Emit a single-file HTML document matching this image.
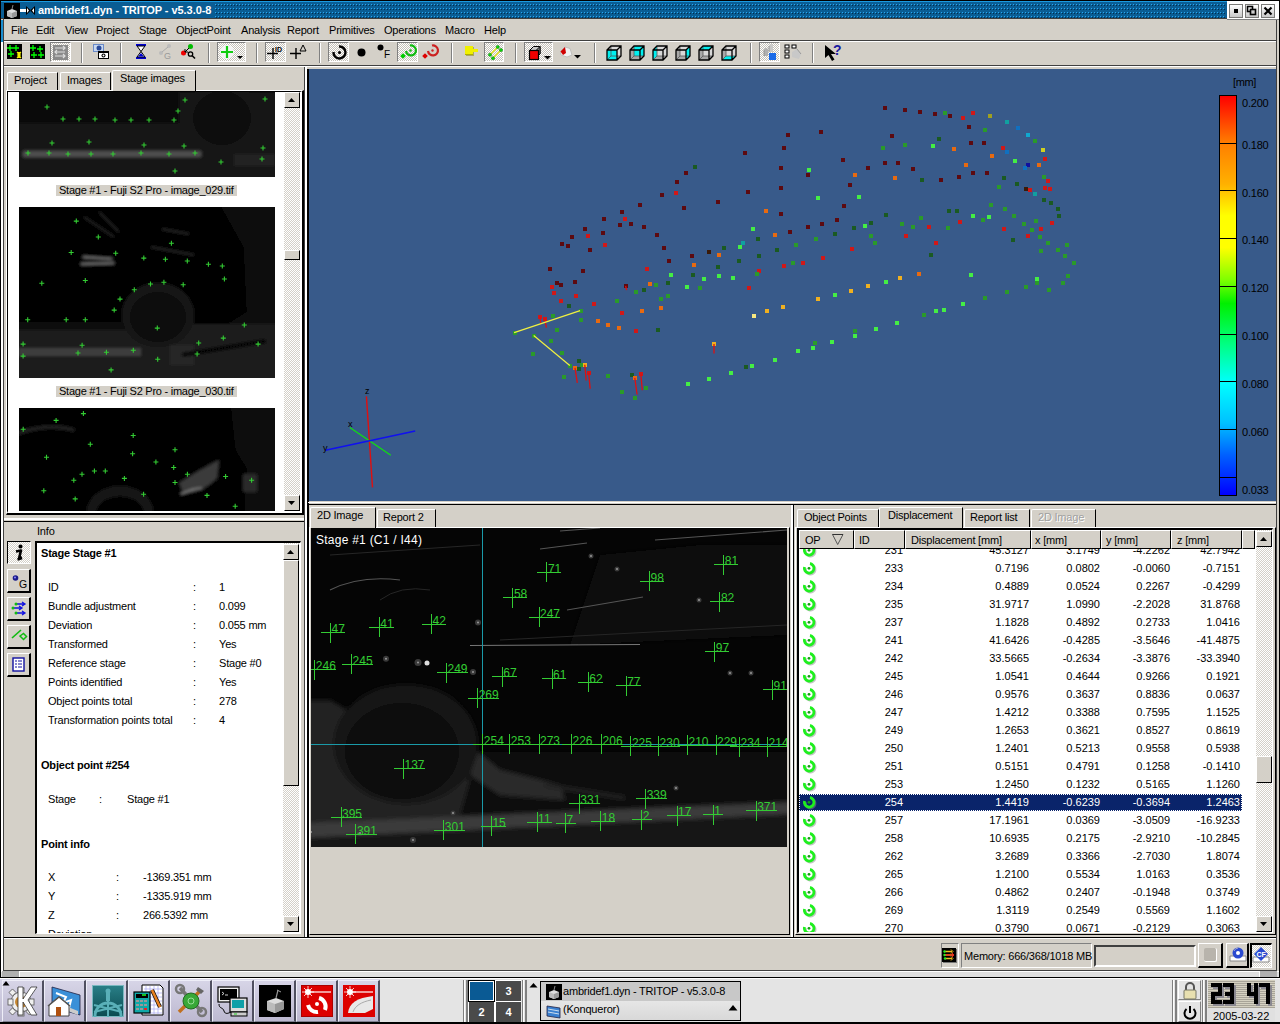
<!DOCTYPE html>
<html><head><meta charset="utf-8">
<style>
*{box-sizing:border-box}
html,body{margin:0;padding:0}
body{width:1280px;height:1024px;overflow:hidden;position:relative;background:#d4d0c8;font-family:"Liberation Sans",sans-serif;font-size:11px;color:#000}
.a{position:absolute}
.t{position:absolute;white-space:pre;line-height:13px;letter-spacing:-0.2px}
.r{position:absolute;white-space:pre;line-height:13px;text-align:right}
svg{overflow:visible}
</style></head><body>
<!-- window frame -->
<div class="a" style="left:0;top:0;width:1280px;height:1px;background:#000"></div>
<div class="a" style="left:0;top:0;width:1px;height:977px;background:#000"></div>
<div class="a" style="left:1279px;top:0;width:1px;height:977px;background:#000"></div>
<div class="a" style="left:1px;top:20px;width:2px;height:22px;background:#1a8ed0"></div>
<div class="a" style="left:1px;top:42px;width:2px;height:935px;background:#fff"></div>
<div class="a" style="left:3px;top:19px;width:1px;height:952px;background:#404040"></div>
<div class="a" style="left:1277px;top:19px;width:2px;height:958px;background:#d4d0c8"></div>
<div class="a" style="left:1276px;top:19px;width:1px;height:952px;background:#404040"></div>
<!-- title bar -->
<div class="a" style="left:1px;top:1px;width:1226px;height:18px;background:#0a5d94;border-top:1px solid #1a9ae0;border-bottom:1px solid #404040"></div>
<svg class="a" style="left:214px;top:3px" width="1012" height="16">
<defs><pattern id="dots" x="0" y="0" width="3" height="4" patternUnits="userSpaceOnUse">
<rect x="1" y="1" width="1" height="1" fill="#2aa8f0"/><rect x="2" y="2" width="1" height="1" fill="#02304f"/></pattern></defs>
<rect width="1012" height="16" fill="url(#dots)"/></svg>
<div class="a" style="left:1227px;top:1px;width:52px;height:19px;background:#fff;border-bottom:1px solid #808080"></div>
<div class="a" style="left:1229px;top:4px;width:14px;height:14px;border:1px solid #7a7a78;background:linear-gradient(#fff,#c8c8c8)"></div>
<div class="a" style="left:1234px;top:9px;width:4px;height:4px;background:#000"></div>
<div class="a" style="left:1245px;top:4px;width:14px;height:14px;border:1px solid #7a7a78;background:linear-gradient(#fff,#c8c8c8)"></div>
<svg class="a" style="left:1245px;top:4px" width="14" height="14"><rect x="2.5" y="2.5" width="5" height="5" fill="none" stroke="#000" stroke-width="1.6"/><rect x="5.5" y="5.5" width="5" height="5" fill="#ccc" stroke="#000" stroke-width="1.6"/></svg>
<div class="a" style="left:1261px;top:4px;width:14px;height:14px;border:1px solid #7a7a78;background:linear-gradient(#fff,#c8c8c8)"></div>
<svg class="a" style="left:1261px;top:4px" width="14" height="14"><path d="M3.5 3.5L10.5 10.5M10.5 3.5L3.5 10.5" stroke="#000" stroke-width="2.2"/></svg>
<div class="a" style="left:4px;top:3px;width:16px;height:16px;background:#000"></div>
<svg class="a" style="left:4px;top:3px" width="16" height="16"><path d="M3 8 L8 6 L13 8 L13 13 L8 15 L3 13Z" fill="#ddd"/><path d="M8 10 L13 8 L13 13 L8 15Z" fill="#999"/><path d="M3 8 L8 10 L8 15 L3 13Z" fill="#bbb"/><path d="M8 6 L9 2" stroke="#888" stroke-width="1"/></svg>
<svg class="a" style="left:20px;top:4px" width="16" height="14"><rect x="0" y="5" width="6" height="3" fill="#fff"/><path d="M6 2 L11 6.5 L6 11Z M15 2 L10 6.5 L15 11Z" fill="#000"/><path d="M7 4 L9 6.5 L7 9Z M14 4 L12 6.5 L14 9Z" fill="#fff"/></svg>
<div class="t" style="left:38px;top:4px;color:#fff;font-weight:bold;font-size:11px;letter-spacing:-0.05px">ambridef1.dyn - TRITOP - v5.3.0-8</div>
<!-- menu -->
<div class="t" style="left:11px;top:24px">File</div>
<div class="t" style="left:36px;top:24px">Edit</div>
<div class="t" style="left:65px;top:24px">View</div>
<div class="t" style="left:96px;top:24px">Project</div>
<div class="t" style="left:139px;top:24px">Stage</div>
<div class="t" style="left:176px;top:24px">ObjectPoint</div>
<div class="t" style="left:241px;top:24px">Analysis</div>
<div class="t" style="left:287px;top:24px">Report</div>
<div class="t" style="left:329px;top:24px">Primitives</div>
<div class="t" style="left:384px;top:24px">Operations</div>
<div class="t" style="left:445px;top:24px">Macro</div>
<div class="t" style="left:484px;top:24px">Help</div>
<div class="a" style="left:4px;top:40px;width:1272px;height:1px;background:#404040"></div>
<div class="a" style="left:4px;top:41px;width:1272px;height:1px;background:#fff"></div>
<div class="a" style="left:4px;top:65px;width:1272px;height:1px;background:#404040"></div>
<div class="a" style="left:4px;top:66px;width:1272px;height:1px;background:#fff"></div>

<!-- toolbar -->

<svg class="a" style="left:7px;top:44px" width="15" height="15"><rect width="15" height="15" fill="#000"/><path d="M3 1v6M0 4h6M9 1v6M6 4h6M4 7v6M1 10h6" stroke="#0f0" stroke-width="1.3"/><path d="M10 8l2 2 2-2M10 14l2-2 2 2M11 10h2v2h-2z" stroke="#ee0" stroke-width="1.2" fill="#ee0"/></svg>
<svg class="a" style="left:30px;top:44px" width="15" height="15"><rect width="15" height="15" fill="#000"/><path d="M3 1v6M0 4h6M10 2v6M7 5h6M4 8v6M1 11h6M11 8v6M8 11h6" stroke="#0f0" stroke-width="1.3"/></svg>
<div class="a" style="left:50px;top:42px;width:21px;height:20px;border-top:1px solid #808080;border-left:1px solid #808080;border-bottom:1px solid #fff;border-right:1px solid #fff;background:repeating-conic-gradient(#c4c0b8 0 25%,#fff 0 50%) 0 0/2px 2px"></div>
<svg class="a" style="left:53px;top:45px" width="15" height="15"><rect width="15" height="15" fill="#8a8a8a"/><path d="M2 3h10M2 7h10M2 11h10M10 1l2 2-2 2M4 5l-2 2 2 2M10 9l2 2-2 2" stroke="#ddd" stroke-width="1.2" fill="none"/></svg>
<div class="a" style="left:81px;top:43px;width:2px;height:20px;border-left:1px solid #808080;border-right:1px solid #fff"></div>
<svg class="a" style="left:93px;top:44px" width="17" height="16"><rect x="0" y="0" width="11" height="8" fill="#6a8ac8"/><rect x="1" y="1" width="9" height="6" fill="#c8d8f0"/><circle cx="6" cy="4" r="2.5" fill="#2a4a9a"/><rect x="5" y="7" width="11" height="8" fill="#000"/><rect x="6" y="9" width="9" height="5" fill="#fff"/><circle cx="10.5" cy="11.5" r="2" fill="#000"/><circle cx="10.5" cy="11.5" r="1" fill="#fff"/></svg>
<div class="a" style="left:120px;top:43px;width:2px;height:20px;border-left:1px solid #808080;border-right:1px solid #fff"></div>
<svg class="a" style="left:136px;top:44px" width="11" height="16"><rect x="0" y="0" width="10" height="2" fill="#00c"/><rect x="0" y="13" width="10" height="2" fill="#00c"/><path d="M1 2h8L5 7.5 9 13H1L5 7.5Z" fill="#fff" stroke="#000" stroke-width="1"/><path d="M2 12.5h6L5 9Z" fill="#00c"/></svg>
<svg class="a" style="left:158px;top:44px" width="14" height="16"><circle cx="11" cy="2" r="2" fill="#bbb"/><circle cx="3" cy="9" r="2" fill="#bbb"/><path d="M4 8L10 3" stroke="#aaa"/><text x="6" y="15" font-size="9" fill="#999" font-family="Liberation Sans">G</text></svg>
<svg class="a" style="left:181px;top:44px" width="16" height="16"><circle cx="9.5" cy="2.5" r="2.5" fill="#0b0"/><circle cx="2.5" cy="9" r="2.5" fill="#e00"/><path d="M8 4L4 8M4 5v3h3" stroke="#000" stroke-width="1" fill="none"/><circle cx="9.5" cy="10" r="2.2" fill="none" stroke="#000" stroke-width="1.3"/><path d="M11 11.5L14 14.5" stroke="#000" stroke-width="1.6"/></svg>
<div class="a" style="left:208px;top:43px;width:2px;height:20px;border-left:1px solid #808080;border-right:1px solid #fff"></div>
<div class="a" style="left:217px;top:42px;width:29px;height:20px;border-top:1px solid #808080;border-left:1px solid #808080;border-bottom:1px solid #fff;border-right:1px solid #fff;background:repeating-conic-gradient(#c4c0b8 0 25%,#fff 0 50%) 0 0/2px 2px"></div>
<svg class="a" style="left:219px;top:44px" width="26" height="17"><circle cx="8" cy="8" r="7" fill="#f4f4f4"/><path d="M8 2v12M2 8h12" stroke="#1c1" stroke-width="2.2"/><path d="M18 12h6l-3 3z" fill="#000"/></svg>
<div class="a" style="left:256px;top:43px;width:2px;height:20px;border-left:1px solid #808080;border-right:1px solid #fff"></div>
<div class="a" style="left:265px;top:42px;width:21px;height:20px;border-top:1px solid #808080;border-left:1px solid #808080;border-bottom:1px solid #fff;border-right:1px solid #fff;background:repeating-conic-gradient(#c4c0b8 0 25%,#fff 0 50%) 0 0/2px 2px"></div>
<svg class="a" style="left:267px;top:44px" width="18" height="16"><path d="M6 4v11M0 9.5h11" stroke="#000" stroke-width="1.4"/><text x="8" y="8" font-size="7" font-weight="bold" font-family="Liberation Sans">ID</text></svg>
<svg class="a" style="left:290px;top:44px" width="16" height="16"><path d="M6 4v11M0 9.5h11" stroke="#000" stroke-width="1.4"/><path d="M10 7l3-6 3 6z" fill="none" stroke="#000" stroke-width="1"/></svg>
<div class="a" style="left:319px;top:43px;width:2px;height:20px;border-left:1px solid #808080;border-right:1px solid #fff"></div>
<div class="a" style="left:328px;top:42px;width:21px;height:20px;border-top:1px solid #808080;border-left:1px solid #808080;border-bottom:1px solid #fff;border-right:1px solid #fff;background:repeating-conic-gradient(#c4c0b8 0 25%,#fff 0 50%) 0 0/2px 2px"></div>
<svg class="a" style="left:332px;top:45px" width="15" height="15"><path d="M7 1.5A6 6 0 1 1 1.5 7" fill="none" stroke="#000" stroke-width="2.4"/><circle cx="7.5" cy="7.5" r="1.5" fill="#000"/></svg>
<svg class="a" style="left:357px;top:48px" width="10" height="10"><circle cx="4.5" cy="4.5" r="4" fill="#000"/></svg>
<svg class="a" style="left:377px;top:44px" width="16" height="16"><circle cx="3.5" cy="3.5" r="3" fill="#000"/><text x="7" y="14" font-size="10" font-family="Liberation Sans">F</text></svg>
<div class="a" style="left:397px;top:42px;width:21px;height:20px;border-top:1px solid #808080;border-left:1px solid #808080;border-bottom:1px solid #fff;border-right:1px solid #fff;background:repeating-conic-gradient(#c4c0b8 0 25%,#fff 0 50%) 0 0/2px 2px"></div>
<svg class="a" style="left:401px;top:44px" width="15" height="16"><path d="M9 1.5A5 5 0 1 1 5 7" fill="none" stroke="#1b1" stroke-width="2.2"/><circle cx="9.5" cy="6.5" r="1.2" fill="#1b1"/><rect x="0" y="10" width="4" height="4" transform="rotate(45 2 12)" fill="#0c0"/></svg>
<svg class="a" style="left:423px;top:44px" width="15" height="16"><path d="M9 1.5A5 5 0 1 1 5 7" fill="none" stroke="#c22" stroke-width="2.2"/><circle cx="9.5" cy="6.5" r="1.2" fill="#c22"/><rect x="0" y="10" width="4" height="4" transform="rotate(45 2 12)" fill="#d00"/></svg>
<div class="a" style="left:451px;top:43px;width:2px;height:20px;border-left:1px solid #808080;border-right:1px solid #fff"></div>
<svg class="a" style="left:465px;top:46px" width="15" height="12"><rect x="1" y="1" width="8" height="9" fill="#808000" opacity="0.5"/><rect x="0" y="0" width="8" height="9" fill="#f0f000"/><rect x="8" y="3" width="5" height="3" fill="#f0f000"/><rect x="0" y="8" width="8" height="1" fill="#b0b000"/></svg>
<div class="a" style="left:484px;top:42px;width:20px;height:20px;border-top:1px solid #808080;border-left:1px solid #808080;border-bottom:1px solid #fff;border-right:1px solid #fff;background:repeating-conic-gradient(#c4c0b8 0 25%,#fff 0 50%) 0 0/2px 2px"></div>
<svg class="a" style="left:486px;top:44px" width="18" height="18"><path d="M4 10.75L11.75 3M7 14.25L15 6" stroke="#e8e820" stroke-width="1.4"/><circle cx="4" cy="10.75" r="1.6" fill="#10d010" stroke="#080" stroke-width="0.5"/><circle cx="7" cy="14.25" r="1.6" fill="#10d010" stroke="#080" stroke-width="0.5"/><circle cx="11.75" cy="3" r="1.6" fill="#10d010" stroke="#080" stroke-width="0.5"/><circle cx="15" cy="6" r="1.6" fill="#10d010" stroke="#080" stroke-width="0.5"/></svg>
<div class="a" style="left:515px;top:43px;width:2px;height:20px;border-left:1px solid #808080;border-right:1px solid #fff"></div>
<div class="a" style="left:524px;top:42px;width:29px;height:20px;border-top:1px solid #808080;border-left:1px solid #808080;border-bottom:1px solid #fff;border-right:1px solid #fff;background:repeating-conic-gradient(#c4c0b8 0 25%,#fff 0 50%) 0 0/2px 2px"></div>
<svg class="a" style="left:527px;top:44px" width="26" height="17"><path d="M2.5 6.5L6.5 2.5H13V10L9 14H2.5Z" fill="#c8c8c8" stroke="#000" stroke-width="1"/><path d="M9 6.5L13 2.5V10L9 14Z" fill="#8a8a8a" stroke="#000" stroke-width="1"/><rect x="2.5" y="6.5" width="9" height="9" fill="#f00000" stroke="#000" stroke-width="1.2"/><path d="M17 12h7l-3.5 3.5z" fill="#000"/></svg>
<svg class="a" style="left:559px;top:44px" width="24" height="17"><path d="M1.5 7.5L6 3L11 4.5L13 11L8 13L2 11Z" fill="#f0f0f0" stroke="#aaa" stroke-width="0.6"/><path d="M1.5 7.5L6 3L7 9L4 11Z" fill="#d00000"/><path d="M15 11h7l-3.5 3.5z" fill="#000"/></svg>
<div class="a" style="left:594px;top:43px;width:2px;height:20px;border-left:1px solid #808080;border-right:1px solid #fff"></div>
<svg class="a" style="left:606px;top:45px" width="17" height="17"><path d="M1 5L5 1H15V11L11 15H1Z" fill="#a8a8a8"/><path d="M5 1H15V11H5Z" fill="#d8d8d8"/><path d="M1 5H11V15H1Z" fill="#00f0f0"/><path d="M5 1V11H15M5 11L1 15" stroke="#555" stroke-width="0.8" fill="none"/><path d="M1 5L5 1H15V11L11 15H1Z M1 5H11V15M11 5L15 1" stroke="#000" stroke-width="1.3" fill="none"/></svg>
<svg class="a" style="left:629px;top:45px" width="17" height="17"><path d="M1 5L5 1H15V11L11 15H1Z" fill="#a8a8a8"/><path d="M5 1H15V11H5Z" fill="#d8d8d8"/><path d="M5 1H15V11H5Z" fill="#00f0f0"/><path d="M5 1V11H15M5 11L1 15" stroke="#555" stroke-width="0.8" fill="none"/><path d="M1 5L5 1H15V11L11 15H1Z M1 5H11V15M11 5L15 1" stroke="#000" stroke-width="1.3" fill="none"/></svg>
<svg class="a" style="left:652px;top:45px" width="17" height="17"><path d="M1 5L5 1H15V11L11 15H1Z" fill="#a8a8a8"/><path d="M5 1H15V11H5Z" fill="#d8d8d8"/><path d="M1 5L5 1V11L1 15Z" fill="#00f0f0"/><path d="M5 1V11H15M5 11L1 15" stroke="#555" stroke-width="0.8" fill="none"/><path d="M1 5L5 1H15V11L11 15H1Z M1 5H11V15M11 5L15 1" stroke="#000" stroke-width="1.3" fill="none"/></svg>
<svg class="a" style="left:675px;top:45px" width="17" height="17"><path d="M1 5L5 1H15V11L11 15H1Z" fill="#a8a8a8"/><path d="M5 1H15V11H5Z" fill="#d8d8d8"/><path d="M11 5L15 1V11L11 15Z" fill="#00f0f0"/><path d="M5 1V11H15M5 11L1 15" stroke="#555" stroke-width="0.8" fill="none"/><path d="M1 5L5 1H15V11L11 15H1Z M1 5H11V15M11 5L15 1" stroke="#000" stroke-width="1.3" fill="none"/></svg>
<svg class="a" style="left:698px;top:45px" width="17" height="17"><path d="M1 5L5 1H15V11L11 15H1Z" fill="#a8a8a8"/><path d="M5 1H15V11H5Z" fill="#d8d8d8"/><path d="M1 5L5 1H15L11 5Z" fill="#00f0f0"/><path d="M5 1V11H15M5 11L1 15" stroke="#555" stroke-width="0.8" fill="none"/><path d="M1 5L5 1H15V11L11 15H1Z M1 5H11V15M11 5L15 1" stroke="#000" stroke-width="1.3" fill="none"/></svg>
<svg class="a" style="left:721px;top:45px" width="17" height="17"><path d="M1 5L5 1H15V11L11 15H1Z" fill="#a8a8a8"/><path d="M5 1H15V11H5Z" fill="#d8d8d8"/><path d="M1 15L5 11H15L11 15Z" fill="#00f0f0"/><path d="M5 1V11H15M5 11L1 15" stroke="#555" stroke-width="0.8" fill="none"/><path d="M1 5L5 1H15V11L11 15H1Z M1 5H11V15M11 5L15 1" stroke="#000" stroke-width="1.3" fill="none"/></svg>
<div class="a" style="left:750px;top:43px;width:2px;height:20px;border-left:1px solid #808080;border-right:1px solid #fff"></div>
<div class="a" style="left:759px;top:42px;width:21px;height:20px;border-top:1px solid #808080;border-left:1px solid #808080;border-bottom:1px solid #fff;border-right:1px solid #fff;background:repeating-conic-gradient(#c4c0b8 0 25%,#fff 0 50%) 0 0/2px 2px"></div>
<svg class="a" style="left:762px;top:44px" width="16" height="17"><path d="M2 6a2 2 0 0 1 4 0v6H2z" fill="#b0b0b0"/><path d="M7 2a2 2 0 0 1 4 0v6H7z" fill="#c8c8c8"/><rect x="7" y="9" width="7" height="7" fill="#1a6ae8"/><path d="M2 6v6M7 2v6" stroke="#888" stroke-width="0.8"/></svg>
<svg class="a" style="left:784px;top:44px" width="18" height="17"><rect x="1" y="1" width="4" height="3" fill="#fff" stroke="#000"/><rect x="1" y="6" width="4" height="3" fill="#fff" stroke="#000"/><rect x="1" y="11" width="4" height="3" fill="#fff" stroke="#000"/><rect x="8" y="1" width="4" height="3" fill="#fff" stroke="#000"/><path d="M8 8L13 5L17 10L15 15L8 13Z" fill="#c8c8c8"/><path d="M13 5L17 10" stroke="#999"/></svg>
<div class="a" style="left:812px;top:43px;width:2px;height:20px;border-left:1px solid #808080;border-right:1px solid #fff"></div>
<svg class="a" style="left:824px;top:44px" width="18" height="18"><path d="M1 1L1 14L4.5 11L8 17L10.5 15.5L7 10H12Z" fill="#000"/><text x="9" y="11" font-size="14" font-weight="bold" fill="#1a1aa0" font-family="Liberation Sans">?</text></svg>

<!-- left panel -->
<div class="a" style="left:7px;top:72px;width:51px;height:18px;border-top:1px solid #fff;border-left:1px solid #fff;border-right:1px solid #000;border-top-left-radius:2px"></div>
<div class="t" style="left:14px;top:74px">Project</div>
<div class="a" style="left:60px;top:72px;width:51px;height:18px;border-top:1px solid #fff;border-left:1px solid #fff;border-right:1px solid #000;border-top-left-radius:2px"></div>
<div class="t" style="left:67px;top:74px">Images</div>
<div class="a" style="left:112px;top:70px;width:84px;height:21px;border-top:1px solid #fff;border-left:1px solid #fff;border-right:1px solid #000;border-top-left-radius:2px;background:#d4d0c8;z-index:2"></div>
<div class="t" style="left:120px;top:72px;z-index:3">Stage images</div>
<div class="a" style="left:6px;top:90px;width:298px;height:425px;border-top:1px solid #fff;border-left:1px solid #fff;border-right:2px solid #000;border-bottom:2px solid #000"></div>
<div class="a" style="left:7px;top:91px;width:295px;height:422px;border-top:1px solid #000;border-left:1px solid #000;border-right:2px solid #fff;border-bottom:2px solid #fff;background:#fff;overflow:hidden">

<svg class="a" style="left:11px;top:0px" width="256" height="85" viewBox="0 86 256 85"><defs><filter id="bl0" x="-10%" y="-10%" width="120%" height="120%"><feGaussianBlur stdDeviation="1.5"/></filter><clipPath id="cp0"><rect x="0" y="0" width="256" height="171"/></clipPath></defs><g clip-path="url(#cp0)"><rect x="0" y="0" width="256" height="171" fill="#0a0a0a"/><g filter="url(#bl0)"><rect x="-5" y="117" width="270" height="60" fill="#161616"/>
<rect x="160" y="86" width="100" height="40" fill="#141414"/>
<ellipse cx="203" cy="110" rx="37" ry="34" fill="#181818"/>
<ellipse cx="203" cy="112" rx="29" ry="27" fill="#0a0a0a"/>
<rect x="4" y="145" width="178" height="6" fill="#505050"/>
<rect x="215" y="148" width="41" height="20" fill="#242424"/>
<rect x="-5" y="160" width="270" height="20" fill="#161616"/></g><path d="M25.5 101.0h5.0M28.0 98.5v5.0" stroke="#3c3" stroke-width="1.1"/><path d="M41.5 113.0h5.0M44.0 110.5v5.0" stroke="#3c3" stroke-width="1.1"/><path d="M57.5 113.0h5.0M60.0 110.5v5.0" stroke="#3c3" stroke-width="1.1"/><path d="M73.5 113.0h5.0M76.0 110.5v5.0" stroke="#3c3" stroke-width="1.1"/><path d="M93.5 114.0h5.0M96.0 111.5v5.0" stroke="#3c3" stroke-width="1.1"/><path d="M109.5 114.0h5.0M112.0 111.5v5.0" stroke="#3c3" stroke-width="1.1"/><path d="M127.5 114.0h5.0M130.0 111.5v5.0" stroke="#3c3" stroke-width="1.1"/><path d="M152.5 114.0h5.0M155.0 111.5v5.0" stroke="#3c3" stroke-width="1.1"/><path d="M156.5 105.0h5.0M159.0 102.5v5.0" stroke="#3c3" stroke-width="1.1"/><path d="M163.5 94.0h5.0M166.0 91.5v5.0" stroke="#3c3" stroke-width="1.1"/><path d="M243.5 93.0h5.0M246.0 90.5v5.0" stroke="#3c3" stroke-width="1.1"/><path d="M30.5 137.0h5.0M33.0 134.5v5.0" stroke="#3c3" stroke-width="1.1"/><path d="M67.5 136.0h5.0M70.0 133.5v5.0" stroke="#3c3" stroke-width="1.1"/><path d="M122.5 139.0h5.0M125.0 136.5v5.0" stroke="#3c3" stroke-width="1.1"/><path d="M162.5 140.0h5.0M165.0 137.5v5.0" stroke="#3c3" stroke-width="1.1"/><path d="M6.5 147.0h5.0M9.0 144.5v5.0" stroke="#3c3" stroke-width="1.1"/><path d="M27.5 147.0h5.0M30.0 144.5v5.0" stroke="#3c3" stroke-width="1.1"/><path d="M46.5 148.0h5.0M49.0 145.5v5.0" stroke="#3c3" stroke-width="1.1"/><path d="M69.5 148.0h5.0M72.0 145.5v5.0" stroke="#3c3" stroke-width="1.1"/><path d="M91.5 148.0h5.0M94.0 145.5v5.0" stroke="#3c3" stroke-width="1.1"/><path d="M119.5 147.0h5.0M122.0 144.5v5.0" stroke="#3c3" stroke-width="1.1"/><path d="M147.5 148.0h5.0M150.0 145.5v5.0" stroke="#3c3" stroke-width="1.1"/><path d="M173.5 147.0h5.0M176.0 144.5v5.0" stroke="#3c3" stroke-width="1.1"/><path d="M199.5 156.0h5.0M202.0 153.5v5.0" stroke="#3c3" stroke-width="1.1"/><path d="M241.5 142.0h5.0M244.0 139.5v5.0" stroke="#3c3" stroke-width="1.1"/><path d="M240.5 153.0h5.0M243.0 150.5v5.0" stroke="#3c3" stroke-width="1.1"/><path d="M153.5 165.0h5.0M156.0 162.5v5.0" stroke="#3c3" stroke-width="1.1"/></g></svg>
<div class="a" style="left:48px;top:93px;width:181px;height:11px;background:#d4d0c8"></div><div class="t" style="left:51px;top:92px;letter-spacing:-0.25px">Stage #1 - Fuji S2 Pro - image_029.tif</div>
<svg class="a" style="left:11px;top:115px" width="256" height="171" viewBox="0 0 256 171"><defs><filter id="bl115" x="-10%" y="-10%" width="120%" height="120%"><feGaussianBlur stdDeviation="1.5"/></filter><clipPath id="cp115"><rect x="0" y="0" width="256" height="171"/></clipPath></defs><g clip-path="url(#cp115)"><rect x="0" y="0" width="256" height="171" fill="#0a0a0a"/><g filter="url(#bl115)"><rect x="-5" y="-5" width="270" height="180" fill="#111"/>
<path d="M-5 -5H200L225 40L228 105L205 120H-5Z" fill="#050505"/>
<rect x="-5" y="117" width="270" height="60" fill="#1a1a1a"/>
<path d="M-5 115H120L110 123H-5Z" fill="#070707"/>
<ellipse cx="139" cy="108" rx="36" ry="32" fill="#161616"/>
<ellipse cx="139" cy="110" rx="28" ry="25" fill="#090909"/>
<rect x="0" y="141" width="122" height="8" fill="#3e3e3e"/>
<rect x="151" y="138" width="24" height="20" fill="#262626"/>
<path d="M163 148L247 134" stroke="#060606" stroke-width="4"/>
<path d="M64 50L93 52M62 57L95 56" stroke="#8a8a8a" stroke-width="1.6"/>
<path d="M65 10L95 30M80 5L100 25M143 22L170 27M132 40L175 48" stroke="#3a3a3a" stroke-width="1"/></g><path d="M54.8 14.1h5.0M57.3 11.6v5.0" stroke="#3c3" stroke-width="1.1"/><path d="M76.8 30.0h5.0M79.3 27.5v5.0" stroke="#3c3" stroke-width="1.1"/><path d="M49.7 45.5h5.0M52.2 43.0v5.0" stroke="#3c3" stroke-width="1.1"/><path d="M94.2 46.2h5.0M96.7 43.7v5.0" stroke="#3c3" stroke-width="1.1"/><path d="M122.3 51.1h5.0M124.8 48.6v5.0" stroke="#3c3" stroke-width="1.1"/><path d="M143.9 52.2h5.0M146.4 49.7v5.0" stroke="#3c3" stroke-width="1.1"/><path d="M165.8 54.0h5.0M168.3 51.5v5.0" stroke="#3c3" stroke-width="1.1"/><path d="M186.9 57.3h5.0M189.4 54.8v5.0" stroke="#3c3" stroke-width="1.1"/><path d="M200.8 59.0h5.0M203.3 56.5v5.0" stroke="#3c3" stroke-width="1.1"/><path d="M202.9 72.0h5.0M205.4 69.5v5.0" stroke="#3c3" stroke-width="1.1"/><path d="M149.9 36.2h5.0M152.4 33.7v5.0" stroke="#3c3" stroke-width="1.1"/><path d="M20.3 76.2h5.0M22.8 73.7v5.0" stroke="#3c3" stroke-width="1.1"/><path d="M63.8 73.5h5.0M66.3 71.0v5.0" stroke="#3c3" stroke-width="1.1"/><path d="M112.8 82.8h5.0M115.3 80.3v5.0" stroke="#3c3" stroke-width="1.1"/><path d="M129.0 77.0h5.0M131.5 74.5v5.0" stroke="#3c3" stroke-width="1.1"/><path d="M142.4 75.2h5.0M144.9 72.7v5.0" stroke="#3c3" stroke-width="1.1"/><path d="M161.7 77.8h5.0M164.2 75.3v5.0" stroke="#3c3" stroke-width="1.1"/><path d="M98.5 92.1h5.0M101.0 89.6v5.0" stroke="#3c3" stroke-width="1.1"/><path d="M92.7 103.1h5.0M95.2 100.6v5.0" stroke="#3c3" stroke-width="1.1"/><path d="M6.2 112.8h5.0M8.7 110.3v5.0" stroke="#3c3" stroke-width="1.1"/><path d="M44.7 112.8h5.0M47.2 110.3v5.0" stroke="#3c3" stroke-width="1.1"/><path d="M63.8 112.8h5.0M66.3 110.3v5.0" stroke="#3c3" stroke-width="1.1"/><path d="M135.8 121.1h5.0M138.3 118.6v5.0" stroke="#3c3" stroke-width="1.1"/><path d="M222.8 118.0h5.0M225.3 115.5v5.0" stroke="#3c3" stroke-width="1.1"/><path d="M201.8 131.1h5.0M204.3 128.6v5.0" stroke="#3c3" stroke-width="1.1"/><path d="M177.2 136.0h5.0M179.7 133.5v5.0" stroke="#3c3" stroke-width="1.1"/><path d="M236.6 137.1h5.0M239.1 134.6v5.0" stroke="#3c3" stroke-width="1.1"/><path d="M1.6 137.1h5.0M4.1 134.6v5.0" stroke="#3c3" stroke-width="1.1"/><path d="M60.6 138.3h5.0M63.1 135.8v5.0" stroke="#3c3" stroke-width="1.1"/><path d="M1.6 149.1h5.0M4.1 146.6v5.0" stroke="#3c3" stroke-width="1.1"/><path d="M56.5 146.0h5.0M59.0 143.5v5.0" stroke="#3c3" stroke-width="1.1"/><path d="M84.9 145.3h5.0M87.4 142.8v5.0" stroke="#3c3" stroke-width="1.1"/><path d="M111.8 143.3h5.0M114.3 140.8v5.0" stroke="#3c3" stroke-width="1.1"/><path d="M136.2 152.2h5.0M138.7 149.7v5.0" stroke="#3c3" stroke-width="1.1"/><path d="M175.6 147.0h5.0M178.1 144.5v5.0" stroke="#3c3" stroke-width="1.1"/><path d="M89.6 162.9h5.0M92.1 160.4v5.0" stroke="#3c3" stroke-width="1.1"/></g></svg>
<div class="a" style="left:48px;top:294px;width:181px;height:11px;background:#d4d0c8"></div><div class="t" style="left:51px;top:293px;letter-spacing:-0.25px">Stage #1 - Fuji S2 Pro - image_030.tif</div>
<svg class="a" style="left:11px;top:316px" width="256" height="103" viewBox="0 0 256 103"><defs><filter id="bl316" x="-10%" y="-10%" width="120%" height="120%"><feGaussianBlur stdDeviation="1.5"/></filter><clipPath id="cp316"><rect x="0" y="0" width="256" height="171"/></clipPath></defs><g clip-path="url(#cp316)"><rect x="0" y="0" width="256" height="171" fill="#0a0a0a"/><g filter="url(#bl316)"><rect x="-5" y="-5" width="270" height="180" fill="#060606"/>
<path d="M212 -5H260V175H200L222 90Z" fill="#101010"/>
<path d="M0 20Q80 0 200 15L228 60L225 120H0Z" fill="#040404"/>
<path d="M160 75Q180 62 200 52L198 70Q185 84 165 86Z" fill="#3a3a3a"/>
<path d="M162 86Q175 80 183 80" stroke="#aaa" stroke-width="1.2" fill="none"/>

<ellipse cx="101" cy="104" rx="33" ry="26" fill="#121212"/>
<ellipse cx="101" cy="108" rx="25" ry="20" fill="#050505"/>
<path d="M0 25Q30 15 55 22" stroke="#242424" stroke-width="3" fill="none"/>
<rect x="224" y="66" width="14" height="18" rx="2" fill="#2a2a2a"/></g><path d="M61.9 5.6h5.0M64.4 3.1v5.0" stroke="#3c3" stroke-width="1.1"/><path d="M34.6 12.4h5.0M37.1 9.9v5.0" stroke="#3c3" stroke-width="1.1"/><path d="M1.7 21.2h5.0M4.2 18.7v5.0" stroke="#3c3" stroke-width="1.1"/><path d="M111.7 27.5h5.0M114.2 25.0v5.0" stroke="#3c3" stroke-width="1.1"/><path d="M68.8 36.2h5.0M71.3 33.7v5.0" stroke="#3c3" stroke-width="1.1"/><path d="M153.5 41.7h5.0M156.0 39.2v5.0" stroke="#3c3" stroke-width="1.1"/><path d="M111.1 45.8h5.0M113.6 43.3v5.0" stroke="#3c3" stroke-width="1.1"/><path d="M134.4 54.0h5.0M136.9 51.5v5.0" stroke="#3c3" stroke-width="1.1"/><path d="M25.0 49.3h5.0M27.5 46.8v5.0" stroke="#3c3" stroke-width="1.1"/><path d="M60.5 66.3h5.0M63.0 63.8v5.0" stroke="#3c3" stroke-width="1.1"/><path d="M72.9 63.0h5.0M75.4 60.5v5.0" stroke="#3c3" stroke-width="1.1"/><path d="M83.8 63.0h5.0M86.3 60.5v5.0" stroke="#3c3" stroke-width="1.1"/><path d="M102.9 70.4h5.0M105.4 67.9v5.0" stroke="#3c3" stroke-width="1.1"/><path d="M152.2 59.5h5.0M154.7 57.0v5.0" stroke="#3c3" stroke-width="1.1"/><path d="M165.9 66.3h5.0M168.4 63.8v5.0" stroke="#3c3" stroke-width="1.1"/><path d="M153.5 74.5h5.0M156.0 72.0v5.0" stroke="#3c3" stroke-width="1.1"/><path d="M204.1 68.5h5.0M206.6 66.0v5.0" stroke="#3c3" stroke-width="1.1"/><path d="M230.1 72.3h5.0M232.6 69.8v5.0" stroke="#3c3" stroke-width="1.1"/><path d="M52.3 72.3h5.0M54.8 69.8v5.0" stroke="#3c3" stroke-width="1.1"/><path d="M22.3 82.7h5.0M24.8 80.2v5.0" stroke="#3c3" stroke-width="1.1"/><path d="M53.7 90.9h5.0M56.2 88.4v5.0" stroke="#3c3" stroke-width="1.1"/><path d="M122.1 86.3h5.0M124.6 83.8v5.0" stroke="#3c3" stroke-width="1.1"/><path d="M185.5 87.4h5.0M188.0 84.9v5.0" stroke="#3c3" stroke-width="1.1"/><path d="M213.7 98.3h5.0M216.2 95.8v5.0" stroke="#3c3" stroke-width="1.1"/></g></svg>
</div>
<div class="a" style="left:284px;top:92px;width:16px;height:419px;background:repeating-conic-gradient(#d4d0c8 0 25%,#fff 0 50%) 0 0/2px 2px"></div>
<div class="a" style="left:284px;top:92px;width:16px;height:16px;background:#d4d0c8;border-top:1px solid #fff;border-left:1px solid #fff;border-right:1px solid #000;border-bottom:1px solid #000"></div>
<svg class="a" style="left:284px;top:92px" width="16" height="16"><path d="M4 10h7l-3.5-4z" fill="#000"/></svg>
<div class="a" style="left:284px;top:250px;width:16px;height:10px;background:#d4d0c8;border-top:1px solid #fff;border-left:1px solid #fff;border-right:1px solid #000;border-bottom:1px solid #000"></div>
<div class="a" style="left:284px;top:495px;width:16px;height:16px;background:#d4d0c8;border-top:1px solid #fff;border-left:1px solid #fff;border-right:1px solid #000;border-bottom:1px solid #000"></div>
<svg class="a" style="left:284px;top:495px" width="16" height="16"><path d="M4 6h7l-3.5 4z" fill="#000"/></svg>
<!-- splitter -->

<div class="a" style="left:4px;top:518px;width:300px;height:2px;background:#fff"></div>
<div class="a" style="left:4px;top:521px;width:300px;height:1px;background:#000"></div>
<div class="a" style="left:305px;top:67px;width:2px;height:870px;background:#fff"></div>
<div class="a" style="left:307px;top:69px;width:2px;height:868px;background:#000"></div>

<!-- 3D view -->
<div class="a" style="left:307px;top:69px;width:2px;height:434px;background:#000"></div>
<div class="a" style="left:304px;top:67px;width:1px;height:870px;background:#404040"></div>
<div class="a" style="left:309px;top:69px;width:967px;height:432px;background:#385a8a"></div>
<div class="a" style="left:308px;top:502px;width:968px;height:1px;background:#fff"></div>
<div class="a" style="left:308px;top:504px;width:968px;height:1px;background:#000"></div>
<svg class="a" style="left:309px;top:69px" width="966" height="432" shape-rendering="crispEdges">
<rect x="329" y="134" width="4" height="4" fill="#5c0a10"/>
<rect x="311" y="141" width="4" height="4" fill="#5c0a10"/>
<rect x="373" y="137" width="4" height="4" fill="#5c0a10"/>
<rect x="407" y="131" width="4" height="4" fill="#5c0a10"/>
<rect x="293" y="148" width="4" height="4" fill="#5c0a10"/>
<rect x="314" y="148" width="4" height="4" fill="#d01818"/>
<rect x="309" y="154" width="4" height="4" fill="#5c0a10"/>
<rect x="320" y="153" width="4" height="4" fill="#5c0a10"/>
<rect x="333" y="156" width="4" height="4" fill="#5c0a10"/>
<rect x="274" y="158" width="4" height="4" fill="#5c0a10"/>
<rect x="277" y="165" width="4" height="4" fill="#d01818"/>
<rect x="292" y="162" width="4" height="4" fill="#5c0a10"/>
<rect x="261" y="166" width="4" height="4" fill="#5c0a10"/>
<rect x="251" y="173" width="4" height="4" fill="#5c0a10"/>
<rect x="257" y="175" width="4" height="4" fill="#5c0a10"/>
<rect x="279" y="179" width="4" height="4" fill="#5c0a10"/>
<rect x="294" y="174" width="4" height="4" fill="#d01818"/>
<rect x="346" y="164" width="4" height="4" fill="#5c0a10"/>
<rect x="353" y="177" width="4" height="4" fill="#5c0a10"/>
<rect x="358" y="190" width="4" height="4" fill="#5c0a10"/>
<rect x="381" y="185" width="4" height="4" fill="#5c0a10"/>
<rect x="336" y="198" width="4" height="4" fill="#d01818"/>
<rect x="239" y="198" width="4" height="4" fill="#5c0a10"/>
<rect x="272" y="200" width="4" height="4" fill="#5c0a10"/>
<rect x="246" y="212" width="4" height="4" fill="#5c0a10"/>
<rect x="250" y="214" width="4" height="4" fill="#5c0a10"/>
<rect x="264" y="211" width="4" height="4" fill="#5c0a10"/>
<rect x="241" y="216" width="4" height="4" fill="#d01818"/>
<rect x="243" y="222" width="4" height="4" fill="#d01818"/>
<rect x="265" y="225" width="4" height="4" fill="#d01818"/>
<rect x="250" y="230" width="4" height="4" fill="#d01818"/>
<rect x="283" y="233" width="4" height="4" fill="#d01818"/>
<rect x="315" y="215" width="4" height="4" fill="#5c0a10"/>
<rect x="258" y="235" width="4" height="4" fill="#1a5a22"/>
<rect x="229" y="246" width="4" height="4" fill="#d01818"/>
<rect x="234" y="248" width="4" height="4" fill="#d01818"/>
<rect x="242" y="245" width="4" height="4" fill="#2a9a2a"/>
<rect x="270" y="240" width="4" height="4" fill="#2a9a2a"/>
<rect x="270" y="249" width="4" height="4" fill="#2a9a2a"/>
<rect x="246" y="259" width="4" height="4" fill="#2a9a2a"/>
<rect x="204" y="262" width="4" height="4" fill="#2a9a2a"/>
<rect x="223" y="265" width="4" height="4" fill="#2a9a2a"/>
<rect x="240" y="270" width="4" height="4" fill="#2a9a2a"/>
<rect x="222" y="283" width="4" height="4" fill="#2a9a2a"/>
<rect x="251" y="282" width="4" height="4" fill="#2a9a2a"/>
<rect x="259" y="295" width="4" height="4" fill="#2a9a2a"/>
<rect x="264" y="297" width="4" height="4" fill="#e86a10"/>
<rect x="268" y="290" width="4" height="4" fill="#1a5a22"/>
<rect x="268" y="298" width="4" height="4" fill="#1a5a22"/>
<rect x="271" y="294" width="4" height="4" fill="#2a9a2a"/>
<rect x="274" y="294" width="4" height="4" fill="#f0b020"/>
<rect x="278" y="302" width="4" height="4" fill="#d01818"/>
<rect x="253" y="306" width="4" height="4" fill="#2a9a2a"/>
<rect x="297" y="305" width="4" height="4" fill="#2a9a2a"/>
<rect x="321" y="304" width="4" height="4" fill="#1a5a22"/>
<rect x="324" y="307" width="4" height="4" fill="#e86a10"/>
<rect x="330" y="303" width="4" height="4" fill="#d01818"/>
<rect x="335" y="317" width="4" height="4" fill="#2a9a2a"/>
<rect x="311" y="321" width="4" height="4" fill="#2a9a2a"/>
<rect x="324" y="327" width="4" height="4" fill="#2a9a2a"/>
<rect x="287" y="250" width="4" height="4" fill="#e86a10"/>
<rect x="297" y="254" width="4" height="4" fill="#e86a10"/>
<rect x="308" y="257" width="4" height="4" fill="#e86a10"/>
<rect x="311" y="242" width="4" height="4" fill="#d01818"/>
<rect x="325" y="260" width="4" height="4" fill="#d01818"/>
<rect x="331" y="240" width="4" height="4" fill="#e86a10"/>
<rect x="350" y="237" width="4" height="4" fill="#e86a10"/>
<rect x="347" y="259" width="4" height="4" fill="#1a5a22"/>
<rect x="306" y="230" width="4" height="4" fill="#2a9a2a"/>
<rect x="325" y="221" width="4" height="4" fill="#2a9a2a"/>
<rect x="333" y="219" width="4" height="4" fill="#1a5a22"/>
<rect x="339" y="213" width="4" height="4" fill="#e86a10"/>
<rect x="345" y="214" width="4" height="4" fill="#2a9a2a"/>
<rect x="357" y="212" width="4" height="4" fill="#1a5a22"/>
<rect x="360" y="204" width="4" height="4" fill="#44ee44"/>
<rect x="350" y="228" width="4" height="4" fill="#2a9a2a"/>
<rect x="357" y="225" width="4" height="4" fill="#2a9a2a"/>
<rect x="376" y="216" width="4" height="4" fill="#44ee44"/>
<rect x="382" y="204" width="4" height="4" fill="#1a5a22"/>
<rect x="383" y="194" width="4" height="4" fill="#e86a10"/>
<rect x="389" y="217" width="4" height="4" fill="#2a9a2a"/>
<rect x="393" y="208" width="4" height="4" fill="#44ee44"/>
<rect x="398" y="181" width="4" height="4" fill="#3a1a08"/>
<rect x="408" y="184" width="4" height="4" fill="#e86a10"/>
<rect x="407" y="196" width="4" height="4" fill="#1a5a22"/>
<rect x="408" y="205" width="4" height="4" fill="#44ee44"/>
<rect x="413" y="177" width="4" height="4" fill="#1a5a22"/>
<rect x="422" y="207" width="4" height="4" fill="#44ee44"/>
<rect x="428" y="190" width="4" height="4" fill="#1a5a22"/>
<rect x="429" y="176" width="4" height="4" fill="#44ee44"/>
<rect x="432" y="172" width="4" height="4" fill="#10a0a0"/>
<rect x="442" y="158" width="4" height="4" fill="#44ee44"/>
<rect x="447" y="168" width="4" height="4" fill="#1a5a22"/>
<rect x="448" y="185" width="4" height="4" fill="#1a5a22"/>
<rect x="448" y="200" width="4" height="4" fill="#d01818"/>
<rect x="446" y="203" width="4" height="4" fill="#2a9a2a"/>
<rect x="455" y="140" width="4" height="4" fill="#e86a10"/>
<rect x="464" y="164" width="4" height="4" fill="#e86a10"/>
<rect x="470" y="143" width="4" height="4" fill="#5c0a10"/>
<rect x="466" y="179" width="4" height="4" fill="#1a5a22"/>
<rect x="473" y="195" width="4" height="4" fill="#d01818"/>
<rect x="479" y="161" width="4" height="4" fill="#5c0a10"/>
<rect x="482" y="192" width="4" height="4" fill="#2a9a2a"/>
<rect x="485" y="174" width="4" height="4" fill="#2a9a2a"/>
<rect x="438" y="217" width="4" height="4" fill="#d01818"/>
<rect x="403" y="273" width="4" height="4" fill="#f0b020"/>
<rect x="443" y="245" width="4" height="4" fill="#f8e880"/>
<rect x="456" y="240" width="4" height="4" fill="#f0b020"/>
<rect x="472" y="236" width="4" height="4" fill="#f0b020"/>
<rect x="487" y="280" width="4" height="4" fill="#44ee44"/>
<rect x="464" y="289" width="4" height="4" fill="#44ee44"/>
<rect x="441" y="295" width="4" height="4" fill="#44ee44"/>
<rect x="435" y="296" width="4" height="4" fill="#1a5a22"/>
<rect x="420" y="302" width="4" height="4" fill="#44ee44"/>
<rect x="398" y="308" width="4" height="4" fill="#44ee44"/>
<rect x="377" y="313" width="4" height="4" fill="#44ee44"/>
<rect x="574" y="37" width="4" height="4" fill="#5c0a10"/>
<rect x="594" y="39" width="4" height="4" fill="#5c0a10"/>
<rect x="609" y="41" width="4" height="4" fill="#5c0a10"/>
<rect x="624" y="43" width="4" height="4" fill="#5c0a10"/>
<rect x="634" y="42" width="4" height="4" fill="#2a9a2a"/>
<rect x="639" y="45" width="4" height="4" fill="#5c0a10"/>
<rect x="652" y="47" width="4" height="4" fill="#d01818"/>
<rect x="662" y="42" width="4" height="4" fill="#d01818"/>
<rect x="679" y="45" width="4" height="4" fill="#a0a020"/>
<rect x="696" y="51" width="4" height="4" fill="#10a0a0"/>
<rect x="707" y="57" width="4" height="4" fill="#1070c0"/>
<rect x="717" y="64" width="4" height="4" fill="#10a8d0"/>
<rect x="724" y="70" width="4" height="4" fill="#2a9a2a"/>
<rect x="732" y="79" width="4" height="4" fill="#d0d020"/>
<rect x="734" y="88" width="4" height="4" fill="#d01818"/>
<rect x="728" y="94" width="4" height="4" fill="#e86a10"/>
<rect x="717" y="94" width="4" height="4" fill="#1010a0"/>
<rect x="714" y="97" width="4" height="4" fill="#1070c0"/>
<rect x="704" y="90" width="4" height="4" fill="#44ee44"/>
<rect x="696" y="81" width="4" height="4" fill="#1070c0"/>
<rect x="692" y="77" width="4" height="4" fill="#d01818"/>
<rect x="681" y="85" width="4" height="4" fill="#e86a10"/>
<rect x="673" y="72" width="4" height="4" fill="#5c0a10"/>
<rect x="660" y="72" width="4" height="4" fill="#5c0a10"/>
<rect x="658" y="56" width="4" height="4" fill="#5c0a10"/>
<rect x="674" y="59" width="4" height="4" fill="#2a9a2a"/>
<rect x="628" y="68" width="4" height="4" fill="#1a5a22"/>
<rect x="622" y="75" width="4" height="4" fill="#44ee44"/>
<rect x="643" y="78" width="4" height="4" fill="#e86a10"/>
<rect x="594" y="74" width="4" height="4" fill="#2a9a2a"/>
<rect x="572" y="77" width="4" height="4" fill="#2a9a2a"/>
<rect x="581" y="65" width="4" height="4" fill="#5c0a10"/>
<rect x="510" y="61" width="4" height="4" fill="#5c0a10"/>
<rect x="477" y="64" width="4" height="4" fill="#5c0a10"/>
<rect x="473" y="77" width="4" height="4" fill="#5c0a10"/>
<rect x="532" y="89" width="4" height="4" fill="#5c0a10"/>
<rect x="470" y="97" width="4" height="4" fill="#5c0a10"/>
<rect x="557" y="97" width="4" height="4" fill="#5c0a10"/>
<rect x="574" y="92" width="4" height="4" fill="#5c0a10"/>
<rect x="587" y="92" width="4" height="4" fill="#5c0a10"/>
<rect x="602" y="98" width="4" height="4" fill="#5c0a10"/>
<rect x="498" y="99" width="4" height="4" fill="#44ee44"/>
<rect x="497" y="104" width="4" height="4" fill="#5c0a10"/>
<rect x="544" y="104" width="4" height="4" fill="#e86a10"/>
<rect x="584" y="107" width="4" height="4" fill="#e86a10"/>
<rect x="611" y="109" width="4" height="4" fill="#1a5a22"/>
<rect x="630" y="109" width="4" height="4" fill="#5c0a10"/>
<rect x="648" y="106" width="4" height="4" fill="#5c0a10"/>
<rect x="655" y="94" width="4" height="4" fill="#e86a10"/>
<rect x="662" y="102" width="4" height="4" fill="#5c0a10"/>
<rect x="676" y="102" width="4" height="4" fill="#5c0a10"/>
<rect x="693" y="107" width="4" height="4" fill="#1a5a22"/>
<rect x="688" y="116" width="4" height="4" fill="#2a9a2a"/>
<rect x="706" y="113" width="4" height="4" fill="#1a5a22"/>
<rect x="715" y="118" width="4" height="4" fill="#3a1a08"/>
<rect x="719" y="119" width="4" height="4" fill="#d01818"/>
<rect x="724" y="123" width="4" height="4" fill="#10a0a0"/>
<rect x="733" y="106" width="4" height="4" fill="#2a9a2a"/>
<rect x="737" y="110" width="4" height="4" fill="#d01818"/>
<rect x="734" y="117" width="4" height="4" fill="#d01818"/>
<rect x="739" y="118" width="4" height="4" fill="#d01818"/>
<rect x="733" y="129" width="4" height="4" fill="#1a5a22"/>
<rect x="740" y="132" width="4" height="4" fill="#1a5a22"/>
<rect x="747" y="138" width="4" height="4" fill="#1a5a22"/>
<rect x="748" y="145" width="4" height="4" fill="#1a5a22"/>
<rect x="741" y="152" width="4" height="4" fill="#d01818"/>
<rect x="730" y="158" width="4" height="4" fill="#d01818"/>
<rect x="725" y="150" width="4" height="4" fill="#2a9a2a"/>
<rect x="721" y="159" width="4" height="4" fill="#2a9a2a"/>
<rect x="717" y="165" width="4" height="4" fill="#d01818"/>
<rect x="729" y="166" width="4" height="4" fill="#2a9a2a"/>
<rect x="737" y="172" width="4" height="4" fill="#2a9a2a"/>
<rect x="756" y="174" width="4" height="4" fill="#2a9a2a"/>
<rect x="747" y="179" width="4" height="4" fill="#2a9a2a"/>
<rect x="730" y="180" width="4" height="4" fill="#2a9a2a"/>
<rect x="754" y="185" width="4" height="4" fill="#2a9a2a"/>
<rect x="763" y="192" width="4" height="4" fill="#2a9a2a"/>
<rect x="757" y="205" width="4" height="4" fill="#2a9a2a"/>
<rect x="752" y="212" width="4" height="4" fill="#2a9a2a"/>
<rect x="738" y="219" width="4" height="4" fill="#2a9a2a"/>
<rect x="726" y="208" width="4" height="4" fill="#44ee44"/>
<rect x="726" y="212" width="4" height="4" fill="#2a9a2a"/>
<rect x="715" y="216" width="4" height="4" fill="#2a9a2a"/>
<rect x="696" y="221" width="4" height="4" fill="#2a9a2a"/>
<rect x="674" y="227" width="4" height="4" fill="#2a9a2a"/>
<rect x="660" y="204" width="4" height="4" fill="#44ee44"/>
<rect x="703" y="145" width="4" height="4" fill="#2a9a2a"/>
<rect x="713" y="153" width="4" height="4" fill="#2a9a2a"/>
<rect x="694" y="138" width="4" height="4" fill="#2a9a2a"/>
<rect x="693" y="158" width="4" height="4" fill="#d01818"/>
<rect x="702" y="169" width="4" height="4" fill="#1a5a22"/>
<rect x="680" y="134" width="4" height="4" fill="#2a9a2a"/>
<rect x="678" y="146" width="4" height="4" fill="#44ee44"/>
<rect x="672" y="149" width="4" height="4" fill="#2a9a2a"/>
<rect x="662" y="145" width="4" height="4" fill="#44ee44"/>
<rect x="646" y="140" width="4" height="4" fill="#1a5a22"/>
<rect x="638" y="140" width="4" height="4" fill="#1a5a22"/>
<rect x="649" y="151" width="4" height="4" fill="#d01818"/>
<rect x="637" y="157" width="4" height="4" fill="#2a9a2a"/>
<rect x="618" y="156" width="4" height="4" fill="#d01818"/>
<rect x="625" y="172" width="4" height="4" fill="#d01818"/>
<rect x="620" y="184" width="4" height="4" fill="#1a5a22"/>
<rect x="610" y="147" width="4" height="4" fill="#2a9a2a"/>
<rect x="602" y="156" width="4" height="4" fill="#2a9a2a"/>
<rect x="591" y="153" width="4" height="4" fill="#2a9a2a"/>
<rect x="595" y="165" width="4" height="4" fill="#d01818"/>
<rect x="575" y="144" width="4" height="4" fill="#1a5a22"/>
<rect x="560" y="152" width="4" height="4" fill="#1a5a22"/>
<rect x="554" y="155" width="4" height="4" fill="#44ee44"/>
<rect x="543" y="157" width="4" height="4" fill="#1a5a22"/>
<rect x="560" y="165" width="4" height="4" fill="#2a9a2a"/>
<rect x="564" y="172" width="4" height="4" fill="#2a9a2a"/>
<rect x="524" y="163" width="4" height="4" fill="#1a5a22"/>
<rect x="505" y="168" width="4" height="4" fill="#2a9a2a"/>
<rect x="497" y="156" width="4" height="4" fill="#5c0a10"/>
<rect x="511" y="153" width="4" height="4" fill="#5c0a10"/>
<rect x="526" y="149" width="4" height="4" fill="#5c0a10"/>
<rect x="533" y="135" width="4" height="4" fill="#5c0a10"/>
<rect x="507" y="127" width="4" height="4" fill="#44ee44"/>
<rect x="548" y="126" width="4" height="4" fill="#44ee44"/>
<rect x="539" y="114" width="4" height="4" fill="#5c0a10"/>
<rect x="470" y="117" width="4" height="4" fill="#5c0a10"/>
<rect x="541" y="178" width="4" height="4" fill="#d01818"/>
<rect x="512" y="187" width="4" height="4" fill="#d01818"/>
<rect x="492" y="192" width="4" height="4" fill="#d01818"/>
<rect x="608" y="203" width="4" height="4" fill="#e86a10"/>
<rect x="589" y="207" width="4" height="4" fill="#f0b020"/>
<rect x="575" y="211" width="4" height="4" fill="#44ee44"/>
<rect x="557" y="215" width="4" height="4" fill="#f0b020"/>
<rect x="540" y="220" width="4" height="4" fill="#f0b020"/>
<rect x="524" y="224" width="4" height="4" fill="#44ee44"/>
<rect x="507" y="228" width="4" height="4" fill="#f0b020"/>
<rect x="384" y="96" width="4" height="4" fill="#1a5a22"/>
<rect x="375" y="102" width="4" height="4" fill="#5c0a10"/>
<rect x="366" y="111" width="4" height="4" fill="#5c0a10"/>
<rect x="365" y="122" width="4" height="4" fill="#d01818"/>
<rect x="351" y="124" width="4" height="4" fill="#5c0a10"/>
<rect x="437" y="121" width="4" height="4" fill="#5c0a10"/>
<rect x="434" y="82" width="4" height="4" fill="#5c0a10"/>
<rect x="652" y="233" width="4" height="4" fill="#44ee44"/>
<rect x="633" y="239" width="4" height="4" fill="#44ee44"/>
<rect x="625" y="240" width="4" height="4" fill="#44ee44"/>
<rect x="613" y="244" width="4" height="4" fill="#2a9a2a"/>
<rect x="586" y="252" width="4" height="4" fill="#44ee44"/>
<rect x="565" y="258" width="4" height="4" fill="#44ee44"/>
<rect x="544" y="260" width="4" height="4" fill="#2a9a2a"/>
<rect x="544" y="265" width="4" height="4" fill="#44ee44"/>
<rect x="521" y="271" width="4" height="4" fill="#44ee44"/>
<rect x="504" y="272" width="4" height="4" fill="#2a9a2a"/>
<rect x="502" y="277" width="4" height="4" fill="#44ee44"/>
<path d="M230.8 247.7L232.0 255.2" stroke="#e01010" stroke-width="1.3" shape-rendering="auto"/>
<path d="M235.8 249.8L237.4 258.7" stroke="#e01010" stroke-width="1.3" shape-rendering="auto"/>
<path d="M266.0 298.8L268.3 313.8" stroke="#e01010" stroke-width="1.3" shape-rendering="auto"/>
<path d="M275.8 295.8L277.2 311.5" stroke="#e01010" stroke-width="1.3" shape-rendering="auto"/>
<path d="M279.6 303.7L281.2 319.7" stroke="#e01010" stroke-width="1.3" shape-rendering="auto"/>
<path d="M325.8 308.9L328.1 325.5" stroke="#e01010" stroke-width="1.3" shape-rendering="auto"/>
<path d="M331.8 304.9L333.3 321.3" stroke="#e01010" stroke-width="1.3" shape-rendering="auto"/>
<path d="M405.0 274.9L405.0 284.5" stroke="#e01010" stroke-width="1.3" shape-rendering="auto"/>
<path d="M316.6 216.8L317.6 221.2" stroke="#e01010" stroke-width="1.3" shape-rendering="auto"/>
<path d="M205.1 263.6L271.1 241.6" stroke="#f0f040" stroke-width="1.2" shape-rendering="auto"/>
<path d="M224.7 266.5L260.8 296.5" stroke="#f0f040" stroke-width="1.2" shape-rendering="auto"/>
<path d="M57.4 327.4L63.5 418.4" stroke="#e01010" stroke-width="1.4" shape-rendering="auto"/>
<path d="M40.8 358.5L81.8 386.3" stroke="#10e010" stroke-width="1.2" shape-rendering="auto"/>
<path d="M16.4 381.3L106.2 362.0" stroke="#1010f0" stroke-width="1.4" shape-rendering="auto"/>
</svg>
<div class="t" style="left:365px;top:387px;font-size:9px;line-height:9px">z</div>
<div class="t" style="left:348px;top:420px;font-size:9px;line-height:9px">x</div>
<div class="t" style="left:323px;top:444px;font-size:9px;line-height:9px">y</div>
<div class="a" style="left:1219px;top:95px;width:18px;height:401px;border:1px solid #000;background:linear-gradient(#ff0000 0%,#ff8000 12%,#ffb000 22%,#ffff00 30%,#ffff00 38%,#80ff00 46%,#00f000 52%,#00ff80 62%,#00ffff 72%,#00c0ff 82%,#0060ff 90%,#0000ff 100%)"></div>
<div class="t" style="left:1242px;top:97px;font-size:11px">0.200</div>
<div class="t" style="left:1242px;top:139px;font-size:11px">0.180</div>
<div class="t" style="left:1242px;top:187px;font-size:11px">0.160</div>
<div class="t" style="left:1242px;top:234px;font-size:11px">0.140</div>
<div class="t" style="left:1242px;top:282px;font-size:11px">0.120</div>
<div class="t" style="left:1242px;top:330px;font-size:11px">0.100</div>
<div class="t" style="left:1242px;top:378px;font-size:11px">0.080</div>
<div class="t" style="left:1242px;top:426px;font-size:11px">0.060</div>
<div class="t" style="left:1242px;top:484px;font-size:11px">0.033</div>
<div class="a" style="left:1220px;top:143px;width:16px;height:1px;background:#000"></div>
<div class="a" style="left:1220px;top:190px;width:16px;height:1px;background:#000"></div>
<div class="a" style="left:1220px;top:238px;width:16px;height:1px;background:#000"></div>
<div class="a" style="left:1220px;top:286px;width:16px;height:1px;background:#000"></div>
<div class="a" style="left:1220px;top:334px;width:16px;height:1px;background:#000"></div>
<div class="a" style="left:1220px;top:381px;width:16px;height:1px;background:#000"></div>
<div class="a" style="left:1220px;top:429px;width:16px;height:1px;background:#000"></div>
<div class="a" style="left:1220px;top:477px;width:16px;height:1px;background:#000"></div>
<div class="t" style="left:1233px;top:76px;font-size:11px;letter-spacing:-0.4px">[mm]</div>
<!-- 2D panel -->
<div class="a" style="left:309px;top:527px;width:481px;height:408px;border-top:1px solid #fff;border-left:1px solid #fff;border-right:1px solid #000;border-bottom:1px solid #000"></div>
<div class="a" style="left:310px;top:507px;width:66px;height:21px;border-top:1px solid #fff;border-left:1px solid #fff;border-right:1px solid #000;border-top-left-radius:2px;background:#d4d0c8"></div>
<div class="t" style="left:317px;top:509px">2D Image</div>
<div class="a" style="left:377px;top:509px;width:59px;height:18px;border-top:1px solid #fff;border-left:1px solid #fff;border-right:1px solid #000;border-top-left-radius:2px"></div>
<div class="t" style="left:383px;top:511px">Report 2</div>

<svg class="a" style="left:311px;top:528px" width="476" height="319"><defs><filter id="b2" x="-5%" y="-5%" width="110%" height="110%"><feGaussianBlur stdDeviation="2"/></filter><clipPath id="c2"><rect width="476" height="319"/></clipPath></defs><g clip-path="url(#c2)">
<rect width="476" height="319" fill="#050505"/><g filter="url(#b2)">
<path d="M289.0 27.0L389.0 17.0L476.0 17.0L476.0 107.0L259.0 117.0Z" fill="#0b0b0b"/>
<rect x="-5" y="224" width="486" height="319" fill="#111"/>
<path d="M-6.0 172.0L19.0 172.0L159.0 252.0L139.0 322.0L-6.0 322.0Z" fill="#222"/>
<ellipse cx="95" cy="216" rx="72" ry="60" fill="#161616"/>
<ellipse cx="91" cy="223" rx="57" ry="48" fill="#080808"/>
<path d="M-6.0 295.0L484.0 274.0L484.0 286.0L-6.0 310.0Z" fill="#3a3a3a"/>
<path d="M-6.0 310.0L484.0 286.0L484.0 322.0L-6.0 322.0Z" fill="#121212"/>
<path d="M167.0 224.0L189.0 242.0L249.0 257.0L254.0 272.0L189.0 267.0L159.0 247.0Z" fill="#2a2a2a"/>
<path d="M234.0 257.0L314.0 270.0" stroke="#202020" stroke-width="4"/>
</g>
<path d="M19.0 27.0L169.0 17.0M189.0 112.0L476.0 97.0M69.0 72.0Q89.0 57.0 119.0 62.0" stroke="#262626" stroke-width="1" fill="none"/>
<path d="M159.0 117.5L329.0 116.5" stroke="#777" stroke-width="1"/>
<path d="M229.0 21.0L276.0 15.0M256.0 82.0L332.0 69.0M249.0 3.0L289.0 0.0M19.0 62.0Q49.0 47.0 89.0 52.0M344.0 12.0L476.0 2.0" stroke="#555" stroke-width="1.2" fill="none"/>
<circle cx="167" cy="94.5" r="3" fill="#3a3a3a"/><circle cx="167" cy="94.5" r="1" fill="#999"/>
<circle cx="75" cy="130.70000000000005" r="3" fill="#3a3a3a"/><circle cx="75" cy="130.70000000000005" r="1" fill="#999"/>
<circle cx="107" cy="134.60000000000002" r="3.5" fill="#3a3a3a"/><circle cx="107" cy="134.60000000000002" r="1" fill="#999"/>
<circle cx="162" cy="144" r="3" fill="#3a3a3a"/><circle cx="162" cy="144" r="1" fill="#999"/>
<circle cx="388" cy="72" r="2.5" fill="#3a3a3a"/><circle cx="388" cy="72" r="1" fill="#999"/>
<circle cx="280" cy="28" r="2.5" fill="#3a3a3a"/><circle cx="280" cy="28" r="1" fill="#999"/>
<circle cx="306" cy="41" r="2.5" fill="#3a3a3a"/><circle cx="306" cy="41" r="1" fill="#999"/>
<circle cx="419" cy="145" r="2.5" fill="#3a3a3a"/><circle cx="419" cy="145" r="1" fill="#999"/>
<circle cx="440" cy="145" r="2.5" fill="#3a3a3a"/><circle cx="440" cy="145" r="1" fill="#999"/>
<circle cx="365" cy="260" r="2.5" fill="#3a3a3a"/><circle cx="365" cy="260" r="1" fill="#999"/>
<circle cx="102" cy="312" r="3" fill="#3a3a3a"/><circle cx="102" cy="312" r="1" fill="#999"/>
<circle cx="49" cy="305" r="3" fill="#3a3a3a"/><circle cx="49" cy="305" r="1" fill="#999"/>
<circle cx="0" cy="304" r="2.5" fill="#3a3a3a"/><circle cx="0" cy="304" r="1" fill="#999"/>
<circle cx="142" cy="285" r="2.5" fill="#3a3a3a"/><circle cx="142" cy="285" r="1" fill="#999"/>
<circle cx="116" cy="135" r="2.5" fill="#ddd"/>
<path d="M171.5 0.0V319M0 216.5H476" stroke="#1a9aa8" stroke-width="1"/>
<path d="M9.5 104.8H33.9M19.5 94.8V114.8" stroke="#33cc33" stroke-width="1" shape-rendering="crispEdges"/>
<text x="20.5" y="105.3" fill="#33cc33" font-size="12" font-family="Liberation Sans">47</text>
<path d="M58.3 99.0H82.7M68.3 89.0V109.0" stroke="#33cc33" stroke-width="1" shape-rendering="crispEdges"/>
<text x="69.3" y="99.5" fill="#33cc33" font-size="12" font-family="Liberation Sans">41</text>
<path d="M110.6 96.2H135.0M120.6 86.2V106.2" stroke="#33cc33" stroke-width="1" shape-rendering="crispEdges"/>
<text x="121.6" y="96.7" fill="#33cc33" font-size="12" font-family="Liberation Sans">42</text>
<path d="M-6.2 141.9H24.9M3.8 131.9V151.9" stroke="#33cc33" stroke-width="1" shape-rendering="crispEdges"/>
<text x="4.8" y="142.4" fill="#33cc33" font-size="12" font-family="Liberation Sans">246</text>
<path d="M30.6 136.0H61.7M40.6 126.0V146.0" stroke="#33cc33" stroke-width="1" shape-rendering="crispEdges"/>
<text x="41.6" y="136.5" fill="#33cc33" font-size="12" font-family="Liberation Sans">245</text>
<path d="M125.5 144.7H156.6M135.5 134.7V154.7" stroke="#33cc33" stroke-width="1" shape-rendering="crispEdges"/>
<text x="136.5" y="145.2" fill="#33cc33" font-size="12" font-family="Liberation Sans">249</text>
<path d="M181.3 148.6H205.7M191.3 138.6V158.6" stroke="#33cc33" stroke-width="1" shape-rendering="crispEdges"/>
<text x="192.3" y="149.1" fill="#33cc33" font-size="12" font-family="Liberation Sans">67</text>
<path d="M156.7 170.4H187.8M166.7 160.4V180.4" stroke="#33cc33" stroke-width="1" shape-rendering="crispEdges"/>
<text x="167.7" y="170.9" fill="#33cc33" font-size="12" font-family="Liberation Sans">269</text>
<path d="M191.9 69.7H216.3M201.9 59.7V79.7" stroke="#33cc33" stroke-width="1" shape-rendering="crispEdges"/>
<text x="202.9" y="70.2" fill="#33cc33" font-size="12" font-family="Liberation Sans">58</text>
<path d="M225.9 44.3H250.3M235.9 34.3V54.3" stroke="#33cc33" stroke-width="1" shape-rendering="crispEdges"/>
<text x="236.9" y="44.8" fill="#33cc33" font-size="12" font-family="Liberation Sans">71</text>
<path d="M218.0 89.2H249.1M228.0 79.2V99.2" stroke="#33cc33" stroke-width="1" shape-rendering="crispEdges"/>
<text x="229.0" y="89.7" fill="#33cc33" font-size="12" font-family="Liberation Sans">247</text>
<path d="M328.6 53.3H353.0M338.6 43.3V63.3" stroke="#33cc33" stroke-width="1" shape-rendering="crispEdges"/>
<text x="339.6" y="53.8" fill="#33cc33" font-size="12" font-family="Liberation Sans">98</text>
<path d="M402.8 36.5H427.2M412.8 26.5V46.5" stroke="#33cc33" stroke-width="1" shape-rendering="crispEdges"/>
<text x="413.8" y="37.0" fill="#33cc33" font-size="12" font-family="Liberation Sans">81</text>
<path d="M398.9 73.6H423.3M408.9 63.6V83.6" stroke="#33cc33" stroke-width="1" shape-rendering="crispEdges"/>
<text x="409.9" y="74.1" fill="#33cc33" font-size="12" font-family="Liberation Sans">82</text>
<path d="M393.8 123.6H418.2M403.8 113.6V133.6" stroke="#33cc33" stroke-width="1" shape-rendering="crispEdges"/>
<text x="404.8" y="124.1" fill="#33cc33" font-size="12" font-family="Liberation Sans">97</text>
<path d="M231.0 150.9H255.4M241.0 140.9V160.9" stroke="#33cc33" stroke-width="1" shape-rendering="crispEdges"/>
<text x="242.0" y="151.4" fill="#33cc33" font-size="12" font-family="Liberation Sans">61</text>
<path d="M267.3 154.4H291.7M277.3 144.4V164.4" stroke="#33cc33" stroke-width="1" shape-rendering="crispEdges"/>
<text x="278.3" y="154.9" fill="#33cc33" font-size="12" font-family="Liberation Sans">62</text>
<path d="M305.2 157.5H329.6M315.2 147.5V167.5" stroke="#33cc33" stroke-width="1" shape-rendering="crispEdges"/>
<text x="316.2" y="158.0" fill="#33cc33" font-size="12" font-family="Liberation Sans">77</text>
<path d="M451.6 161.5H476.0M461.6 151.5V171.5" stroke="#33cc33" stroke-width="1" shape-rendering="crispEdges"/>
<text x="462.6" y="162.0" fill="#33cc33" font-size="12" font-family="Liberation Sans">91</text>
<path d="M161.8 216.1H192.9M171.8 206.1V226.1" stroke="#33cc33" stroke-width="1" shape-rendering="crispEdges"/>
<text x="172.8" y="216.6" fill="#33cc33" font-size="12" font-family="Liberation Sans">254</text>
<path d="M188.8 216.1H219.9M198.8 206.1V226.1" stroke="#33cc33" stroke-width="1" shape-rendering="crispEdges"/>
<text x="199.8" y="216.6" fill="#33cc33" font-size="12" font-family="Liberation Sans">253</text>
<path d="M218.0 216.1H249.1M228.0 206.1V226.1" stroke="#33cc33" stroke-width="1" shape-rendering="crispEdges"/>
<text x="229.0" y="216.6" fill="#33cc33" font-size="12" font-family="Liberation Sans">273</text>
<path d="M250.5 216.1H281.6M260.5 206.1V226.1" stroke="#33cc33" stroke-width="1" shape-rendering="crispEdges"/>
<text x="261.5" y="216.6" fill="#33cc33" font-size="12" font-family="Liberation Sans">226</text>
<path d="M280.6 216.1H311.7M290.6 206.1V226.1" stroke="#33cc33" stroke-width="1" shape-rendering="crispEdges"/>
<text x="291.6" y="216.6" fill="#33cc33" font-size="12" font-family="Liberation Sans">206</text>
<path d="M309.9 218.1H341.0M319.9 208.1V228.1" stroke="#33cc33" stroke-width="1" shape-rendering="crispEdges"/>
<text x="320.9" y="218.6" fill="#33cc33" font-size="12" font-family="Liberation Sans">225</text>
<path d="M337.6 218.1H368.7M347.6 208.1V228.1" stroke="#33cc33" stroke-width="1" shape-rendering="crispEdges"/>
<text x="348.6" y="218.6" fill="#33cc33" font-size="12" font-family="Liberation Sans">230</text>
<path d="M366.5 217.3H397.6M376.5 207.3V227.3" stroke="#33cc33" stroke-width="1" shape-rendering="crispEdges"/>
<text x="377.5" y="217.8" fill="#33cc33" font-size="12" font-family="Liberation Sans">210</text>
<path d="M395.0 217.3H426.1M405.0 207.3V227.3" stroke="#33cc33" stroke-width="1" shape-rendering="crispEdges"/>
<text x="406.0" y="217.8" fill="#33cc33" font-size="12" font-family="Liberation Sans">229</text>
<path d="M418.5 218.9H449.6M428.5 208.9V228.9" stroke="#33cc33" stroke-width="1" shape-rendering="crispEdges"/>
<text x="429.5" y="219.4" fill="#33cc33" font-size="12" font-family="Liberation Sans">234</text>
<path d="M446.6 218.9H477.7M456.6 208.9V228.9" stroke="#33cc33" stroke-width="1" shape-rendering="crispEdges"/>
<text x="457.6" y="219.4" fill="#33cc33" font-size="12" font-family="Liberation Sans">214</text>
<path d="M82.5 240.8H113.6M92.5 230.8V250.8" stroke="#33cc33" stroke-width="1" shape-rendering="crispEdges"/>
<text x="93.5" y="241.3" fill="#33cc33" font-size="12" font-family="Liberation Sans">137</text>
<path d="M258.3 275.9H289.4M268.3 265.9V285.9" stroke="#33cc33" stroke-width="1" shape-rendering="crispEdges"/>
<text x="269.3" y="276.4" fill="#33cc33" font-size="12" font-family="Liberation Sans">331</text>
<path d="M324.7 270.8H355.8M334.7 260.8V280.8" stroke="#33cc33" stroke-width="1" shape-rendering="crispEdges"/>
<text x="335.7" y="271.3" fill="#33cc33" font-size="12" font-family="Liberation Sans">339</text>
<path d="M20.0 289.2H51.1M30.0 279.2V299.2" stroke="#33cc33" stroke-width="1" shape-rendering="crispEdges"/>
<text x="31.0" y="289.7" fill="#33cc33" font-size="12" font-family="Liberation Sans">395</text>
<path d="M34.9 306.0H66.0M44.9 296.0V316.0" stroke="#33cc33" stroke-width="1" shape-rendering="crispEdges"/>
<text x="45.9" y="306.5" fill="#33cc33" font-size="12" font-family="Liberation Sans">391</text>
<path d="M122.8 302.0H153.8M132.8 292.0V312.0" stroke="#33cc33" stroke-width="1" shape-rendering="crispEdges"/>
<text x="133.8" y="302.5" fill="#33cc33" font-size="12" font-family="Liberation Sans">301</text>
<path d="M170.4 298.2H194.8M180.4 288.2V308.2" stroke="#33cc33" stroke-width="1" shape-rendering="crispEdges"/>
<text x="181.4" y="298.7" fill="#33cc33" font-size="12" font-family="Liberation Sans">15</text>
<path d="M216.1 294.3H240.5M226.1 284.3V304.3" stroke="#33cc33" stroke-width="1" shape-rendering="crispEdges"/>
<text x="227.1" y="294.8" fill="#33cc33" font-size="12" font-family="Liberation Sans">11</text>
<path d="M244.6 295.4H264.6M254.6 285.4V305.4" stroke="#33cc33" stroke-width="1" shape-rendering="crispEdges"/>
<text x="255.6" y="295.9" fill="#33cc33" font-size="12" font-family="Liberation Sans">7</text>
<path d="M279.8 293.1H304.2M289.8 283.1V303.1" stroke="#33cc33" stroke-width="1" shape-rendering="crispEdges"/>
<text x="290.8" y="293.6" fill="#33cc33" font-size="12" font-family="Liberation Sans">18</text>
<path d="M320.8 291.5H340.8M330.8 281.5V301.5" stroke="#33cc33" stroke-width="1" shape-rendering="crispEdges"/>
<text x="331.8" y="292.0" fill="#33cc33" font-size="12" font-family="Liberation Sans">2</text>
<path d="M356.0 287.6H380.4M366.0 277.6V297.6" stroke="#33cc33" stroke-width="1" shape-rendering="crispEdges"/>
<text x="367.0" y="288.1" fill="#33cc33" font-size="12" font-family="Liberation Sans">17</text>
<path d="M392.3 286.5H412.3M402.3 276.5V296.5" stroke="#33cc33" stroke-width="1" shape-rendering="crispEdges"/>
<text x="403.3" y="287.0" fill="#33cc33" font-size="12" font-family="Liberation Sans">1</text>
<path d="M435.2 282.5H466.4M445.2 272.5V292.5" stroke="#33cc33" stroke-width="1" shape-rendering="crispEdges"/>
<text x="446.2" y="283.0" fill="#33cc33" font-size="12" font-family="Liberation Sans">371</text>
</g></svg>
<div class="t" style="left:316px;top:534px;color:#fff;font-size:12px;letter-spacing:0.25px">Stage #1 (C1 / I44)</div>
<div class="a" style="left:791px;top:505px;width:2px;height:432px;background:#fff"></div><div class="a" style="left:793px;top:505px;width:1px;height:432px;background:#000"></div>
<!-- table panel -->
<div class="a" style="left:795px;top:527px;width:481px;height:408px;border-top:1px solid #fff;border-left:1px solid #fff;border-right:1px solid #000;border-bottom:1px solid #000"></div>
<div class="a" style="left:797px;top:509px;width:82px;height:18px;border-top:1px solid #fff;border-left:1px solid #fff;border-right:1px solid #000;border-top-left-radius:2px"></div>
<div class="t" style="left:804px;top:511px">Object Points</div>
<div class="a" style="left:879px;top:507px;width:84px;height:21px;border-top:1px solid #fff;border-left:1px solid #fff;border-right:1px solid #000;border-top-left-radius:2px;background:#d4d0c8"></div>
<div class="t" style="left:888px;top:509px">Displacement</div>
<div class="a" style="left:964px;top:509px;width:66px;height:18px;border-top:1px solid #fff;border-left:1px solid #fff;border-right:1px solid #000;border-top-left-radius:2px"></div>
<div class="t" style="left:970px;top:511px">Report list</div>
<div class="a" style="left:1031px;top:509px;width:65px;height:18px;border-top:1px solid #fff;border-left:1px solid #fff;border-right:1px solid #000;border-top-left-radius:2px"></div>
<div class="t" style="left:1039px;top:512px;color:#fff">2D Image</div>
<div class="t" style="left:1038px;top:511px;color:#a0a0a0">2D Image</div>
<div class="a" style="left:797px;top:528px;width:476px;height:405px;border-top:2px solid #000;border-left:2px solid #000;border-right:1px solid #fff;border-bottom:1px solid #fff;background:#fff;overflow:hidden">

<div class="r" style="right:369px;top:14px;color:#000">231</div>
<div class="r" style="right:243px;top:14px;color:#000">45.3127</div>
<div class="r" style="right:172px;top:14px;color:#000">3.1749</div>
<div class="r" style="right:102px;top:14px;color:#000">-4.2262</div>
<div class="r" style="right:32px;top:14px;color:#000">42.7942</div>
<svg class="a" style="left:4px;top:14px" width="13" height="13"><path d="M7 1.5A4.8 4.8 0 1 1 1.5 5" fill="none" stroke="#888" stroke-width="2.6" opacity="0.5" transform="translate(1.2,1.2)"/><path d="M7 1.5A4.8 4.8 0 1 1 1.5 5" fill="none" stroke="#1ef01e" stroke-width="2.8"/><circle cx="6" cy="6.3" r="1.4" fill="#11a011"/></svg>
<div class="r" style="right:369px;top:32px;color:#000">233</div>
<div class="r" style="right:243px;top:32px;color:#000">0.7196</div>
<div class="r" style="right:172px;top:32px;color:#000">0.0802</div>
<div class="r" style="right:102px;top:32px;color:#000">-0.0060</div>
<div class="r" style="right:32px;top:32px;color:#000">-0.7151</div>
<svg class="a" style="left:4px;top:32px" width="13" height="13"><path d="M7 1.5A4.8 4.8 0 1 1 1.5 5" fill="none" stroke="#888" stroke-width="2.6" opacity="0.5" transform="translate(1.2,1.2)"/><path d="M7 1.5A4.8 4.8 0 1 1 1.5 5" fill="none" stroke="#1ef01e" stroke-width="2.8"/><circle cx="6" cy="6.3" r="1.4" fill="#11a011"/></svg>
<div class="r" style="right:369px;top:50px;color:#000">234</div>
<div class="r" style="right:243px;top:50px;color:#000">0.4889</div>
<div class="r" style="right:172px;top:50px;color:#000">0.0524</div>
<div class="r" style="right:102px;top:50px;color:#000">0.2267</div>
<div class="r" style="right:32px;top:50px;color:#000">-0.4299</div>
<svg class="a" style="left:4px;top:50px" width="13" height="13"><path d="M7 1.5A4.8 4.8 0 1 1 1.5 5" fill="none" stroke="#888" stroke-width="2.6" opacity="0.5" transform="translate(1.2,1.2)"/><path d="M7 1.5A4.8 4.8 0 1 1 1.5 5" fill="none" stroke="#1ef01e" stroke-width="2.8"/><circle cx="6" cy="6.3" r="1.4" fill="#11a011"/></svg>
<div class="r" style="right:369px;top:68px;color:#000">235</div>
<div class="r" style="right:243px;top:68px;color:#000">31.9717</div>
<div class="r" style="right:172px;top:68px;color:#000">1.0990</div>
<div class="r" style="right:102px;top:68px;color:#000">-2.2028</div>
<div class="r" style="right:32px;top:68px;color:#000">31.8768</div>
<svg class="a" style="left:4px;top:68px" width="13" height="13"><path d="M7 1.5A4.8 4.8 0 1 1 1.5 5" fill="none" stroke="#888" stroke-width="2.6" opacity="0.5" transform="translate(1.2,1.2)"/><path d="M7 1.5A4.8 4.8 0 1 1 1.5 5" fill="none" stroke="#1ef01e" stroke-width="2.8"/><circle cx="6" cy="6.3" r="1.4" fill="#11a011"/></svg>
<div class="r" style="right:369px;top:86px;color:#000">237</div>
<div class="r" style="right:243px;top:86px;color:#000">1.1828</div>
<div class="r" style="right:172px;top:86px;color:#000">0.4892</div>
<div class="r" style="right:102px;top:86px;color:#000">0.2733</div>
<div class="r" style="right:32px;top:86px;color:#000">1.0416</div>
<svg class="a" style="left:4px;top:86px" width="13" height="13"><path d="M7 1.5A4.8 4.8 0 1 1 1.5 5" fill="none" stroke="#888" stroke-width="2.6" opacity="0.5" transform="translate(1.2,1.2)"/><path d="M7 1.5A4.8 4.8 0 1 1 1.5 5" fill="none" stroke="#1ef01e" stroke-width="2.8"/><circle cx="6" cy="6.3" r="1.4" fill="#11a011"/></svg>
<div class="r" style="right:369px;top:104px;color:#000">241</div>
<div class="r" style="right:243px;top:104px;color:#000">41.6426</div>
<div class="r" style="right:172px;top:104px;color:#000">-0.4285</div>
<div class="r" style="right:102px;top:104px;color:#000">-3.5646</div>
<div class="r" style="right:32px;top:104px;color:#000">-41.4875</div>
<svg class="a" style="left:4px;top:104px" width="13" height="13"><path d="M7 1.5A4.8 4.8 0 1 1 1.5 5" fill="none" stroke="#888" stroke-width="2.6" opacity="0.5" transform="translate(1.2,1.2)"/><path d="M7 1.5A4.8 4.8 0 1 1 1.5 5" fill="none" stroke="#1ef01e" stroke-width="2.8"/><circle cx="6" cy="6.3" r="1.4" fill="#11a011"/></svg>
<div class="r" style="right:369px;top:122px;color:#000">242</div>
<div class="r" style="right:243px;top:122px;color:#000">33.5665</div>
<div class="r" style="right:172px;top:122px;color:#000">-0.2634</div>
<div class="r" style="right:102px;top:122px;color:#000">-3.3876</div>
<div class="r" style="right:32px;top:122px;color:#000">-33.3940</div>
<svg class="a" style="left:4px;top:122px" width="13" height="13"><path d="M7 1.5A4.8 4.8 0 1 1 1.5 5" fill="none" stroke="#888" stroke-width="2.6" opacity="0.5" transform="translate(1.2,1.2)"/><path d="M7 1.5A4.8 4.8 0 1 1 1.5 5" fill="none" stroke="#1ef01e" stroke-width="2.8"/><circle cx="6" cy="6.3" r="1.4" fill="#11a011"/></svg>
<div class="r" style="right:369px;top:140px;color:#000">245</div>
<div class="r" style="right:243px;top:140px;color:#000">1.0541</div>
<div class="r" style="right:172px;top:140px;color:#000">0.4644</div>
<div class="r" style="right:102px;top:140px;color:#000">0.9266</div>
<div class="r" style="right:32px;top:140px;color:#000">0.1921</div>
<svg class="a" style="left:4px;top:140px" width="13" height="13"><path d="M7 1.5A4.8 4.8 0 1 1 1.5 5" fill="none" stroke="#888" stroke-width="2.6" opacity="0.5" transform="translate(1.2,1.2)"/><path d="M7 1.5A4.8 4.8 0 1 1 1.5 5" fill="none" stroke="#1ef01e" stroke-width="2.8"/><circle cx="6" cy="6.3" r="1.4" fill="#11a011"/></svg>
<div class="r" style="right:369px;top:158px;color:#000">246</div>
<div class="r" style="right:243px;top:158px;color:#000">0.9576</div>
<div class="r" style="right:172px;top:158px;color:#000">0.3637</div>
<div class="r" style="right:102px;top:158px;color:#000">0.8836</div>
<div class="r" style="right:32px;top:158px;color:#000">0.0637</div>
<svg class="a" style="left:4px;top:158px" width="13" height="13"><path d="M7 1.5A4.8 4.8 0 1 1 1.5 5" fill="none" stroke="#888" stroke-width="2.6" opacity="0.5" transform="translate(1.2,1.2)"/><path d="M7 1.5A4.8 4.8 0 1 1 1.5 5" fill="none" stroke="#1ef01e" stroke-width="2.8"/><circle cx="6" cy="6.3" r="1.4" fill="#11a011"/></svg>
<div class="r" style="right:369px;top:176px;color:#000">247</div>
<div class="r" style="right:243px;top:176px;color:#000">1.4212</div>
<div class="r" style="right:172px;top:176px;color:#000">0.3388</div>
<div class="r" style="right:102px;top:176px;color:#000">0.7595</div>
<div class="r" style="right:32px;top:176px;color:#000">1.1525</div>
<svg class="a" style="left:4px;top:176px" width="13" height="13"><path d="M7 1.5A4.8 4.8 0 1 1 1.5 5" fill="none" stroke="#888" stroke-width="2.6" opacity="0.5" transform="translate(1.2,1.2)"/><path d="M7 1.5A4.8 4.8 0 1 1 1.5 5" fill="none" stroke="#1ef01e" stroke-width="2.8"/><circle cx="6" cy="6.3" r="1.4" fill="#11a011"/></svg>
<div class="r" style="right:369px;top:194px;color:#000">249</div>
<div class="r" style="right:243px;top:194px;color:#000">1.2653</div>
<div class="r" style="right:172px;top:194px;color:#000">0.3621</div>
<div class="r" style="right:102px;top:194px;color:#000">0.8527</div>
<div class="r" style="right:32px;top:194px;color:#000">0.8619</div>
<svg class="a" style="left:4px;top:194px" width="13" height="13"><path d="M7 1.5A4.8 4.8 0 1 1 1.5 5" fill="none" stroke="#888" stroke-width="2.6" opacity="0.5" transform="translate(1.2,1.2)"/><path d="M7 1.5A4.8 4.8 0 1 1 1.5 5" fill="none" stroke="#1ef01e" stroke-width="2.8"/><circle cx="6" cy="6.3" r="1.4" fill="#11a011"/></svg>
<div class="r" style="right:369px;top:212px;color:#000">250</div>
<div class="r" style="right:243px;top:212px;color:#000">1.2401</div>
<div class="r" style="right:172px;top:212px;color:#000">0.5213</div>
<div class="r" style="right:102px;top:212px;color:#000">0.9558</div>
<div class="r" style="right:32px;top:212px;color:#000">0.5938</div>
<svg class="a" style="left:4px;top:212px" width="13" height="13"><path d="M7 1.5A4.8 4.8 0 1 1 1.5 5" fill="none" stroke="#888" stroke-width="2.6" opacity="0.5" transform="translate(1.2,1.2)"/><path d="M7 1.5A4.8 4.8 0 1 1 1.5 5" fill="none" stroke="#1ef01e" stroke-width="2.8"/><circle cx="6" cy="6.3" r="1.4" fill="#11a011"/></svg>
<div class="r" style="right:369px;top:230px;color:#000">251</div>
<div class="r" style="right:243px;top:230px;color:#000">0.5151</div>
<div class="r" style="right:172px;top:230px;color:#000">0.4791</div>
<div class="r" style="right:102px;top:230px;color:#000">0.1258</div>
<div class="r" style="right:32px;top:230px;color:#000">-0.1410</div>
<svg class="a" style="left:4px;top:230px" width="13" height="13"><path d="M7 1.5A4.8 4.8 0 1 1 1.5 5" fill="none" stroke="#888" stroke-width="2.6" opacity="0.5" transform="translate(1.2,1.2)"/><path d="M7 1.5A4.8 4.8 0 1 1 1.5 5" fill="none" stroke="#1ef01e" stroke-width="2.8"/><circle cx="6" cy="6.3" r="1.4" fill="#11a011"/></svg>
<div class="r" style="right:369px;top:248px;color:#000">253</div>
<div class="r" style="right:243px;top:248px;color:#000">1.2450</div>
<div class="r" style="right:172px;top:248px;color:#000">0.1232</div>
<div class="r" style="right:102px;top:248px;color:#000">0.5165</div>
<div class="r" style="right:32px;top:248px;color:#000">1.1260</div>
<svg class="a" style="left:4px;top:248px" width="13" height="13"><path d="M7 1.5A4.8 4.8 0 1 1 1.5 5" fill="none" stroke="#888" stroke-width="2.6" opacity="0.5" transform="translate(1.2,1.2)"/><path d="M7 1.5A4.8 4.8 0 1 1 1.5 5" fill="none" stroke="#1ef01e" stroke-width="2.8"/><circle cx="6" cy="6.3" r="1.4" fill="#11a011"/></svg>
<div class="a" style="left:0px;top:264px;width:443px;height:17px;background:#0a246a;outline:1px dotted #fff;outline-offset:-1px"></div>
<div class="r" style="right:369px;top:266px;color:#fff">254</div>
<div class="r" style="right:243px;top:266px;color:#fff">1.4419</div>
<div class="r" style="right:172px;top:266px;color:#fff">-0.6239</div>
<div class="r" style="right:102px;top:266px;color:#fff">-0.3694</div>
<div class="r" style="right:32px;top:266px;color:#fff">1.2463</div>
<svg class="a" style="left:4px;top:266px" width="13" height="13"><path d="M7 1.5A4.8 4.8 0 1 1 1.5 5" fill="none" stroke="#888" stroke-width="2.6" opacity="0.5" transform="translate(1.2,1.2)"/><path d="M7 1.5A4.8 4.8 0 1 1 1.5 5" fill="none" stroke="#1ef01e" stroke-width="2.8"/><circle cx="6" cy="6.3" r="1.4" fill="#11a011"/></svg>
<div class="r" style="right:369px;top:284px;color:#000">257</div>
<div class="r" style="right:243px;top:284px;color:#000">17.1961</div>
<div class="r" style="right:172px;top:284px;color:#000">0.0369</div>
<div class="r" style="right:102px;top:284px;color:#000">-3.0509</div>
<div class="r" style="right:32px;top:284px;color:#000">-16.9233</div>
<svg class="a" style="left:4px;top:284px" width="13" height="13"><path d="M7 1.5A4.8 4.8 0 1 1 1.5 5" fill="none" stroke="#888" stroke-width="2.6" opacity="0.5" transform="translate(1.2,1.2)"/><path d="M7 1.5A4.8 4.8 0 1 1 1.5 5" fill="none" stroke="#1ef01e" stroke-width="2.8"/><circle cx="6" cy="6.3" r="1.4" fill="#11a011"/></svg>
<div class="r" style="right:369px;top:302px;color:#000">258</div>
<div class="r" style="right:243px;top:302px;color:#000">10.6935</div>
<div class="r" style="right:172px;top:302px;color:#000">0.2175</div>
<div class="r" style="right:102px;top:302px;color:#000">-2.9210</div>
<div class="r" style="right:32px;top:302px;color:#000">-10.2845</div>
<svg class="a" style="left:4px;top:302px" width="13" height="13"><path d="M7 1.5A4.8 4.8 0 1 1 1.5 5" fill="none" stroke="#888" stroke-width="2.6" opacity="0.5" transform="translate(1.2,1.2)"/><path d="M7 1.5A4.8 4.8 0 1 1 1.5 5" fill="none" stroke="#1ef01e" stroke-width="2.8"/><circle cx="6" cy="6.3" r="1.4" fill="#11a011"/></svg>
<div class="r" style="right:369px;top:320px;color:#000">262</div>
<div class="r" style="right:243px;top:320px;color:#000">3.2689</div>
<div class="r" style="right:172px;top:320px;color:#000">0.3366</div>
<div class="r" style="right:102px;top:320px;color:#000">-2.7030</div>
<div class="r" style="right:32px;top:320px;color:#000">1.8074</div>
<svg class="a" style="left:4px;top:320px" width="13" height="13"><path d="M7 1.5A4.8 4.8 0 1 1 1.5 5" fill="none" stroke="#888" stroke-width="2.6" opacity="0.5" transform="translate(1.2,1.2)"/><path d="M7 1.5A4.8 4.8 0 1 1 1.5 5" fill="none" stroke="#1ef01e" stroke-width="2.8"/><circle cx="6" cy="6.3" r="1.4" fill="#11a011"/></svg>
<div class="r" style="right:369px;top:338px;color:#000">265</div>
<div class="r" style="right:243px;top:338px;color:#000">1.2100</div>
<div class="r" style="right:172px;top:338px;color:#000">0.5534</div>
<div class="r" style="right:102px;top:338px;color:#000">1.0163</div>
<div class="r" style="right:32px;top:338px;color:#000">0.3536</div>
<svg class="a" style="left:4px;top:338px" width="13" height="13"><path d="M7 1.5A4.8 4.8 0 1 1 1.5 5" fill="none" stroke="#888" stroke-width="2.6" opacity="0.5" transform="translate(1.2,1.2)"/><path d="M7 1.5A4.8 4.8 0 1 1 1.5 5" fill="none" stroke="#1ef01e" stroke-width="2.8"/><circle cx="6" cy="6.3" r="1.4" fill="#11a011"/></svg>
<div class="r" style="right:369px;top:356px;color:#000">266</div>
<div class="r" style="right:243px;top:356px;color:#000">0.4862</div>
<div class="r" style="right:172px;top:356px;color:#000">0.2407</div>
<div class="r" style="right:102px;top:356px;color:#000">-0.1948</div>
<div class="r" style="right:32px;top:356px;color:#000">0.3749</div>
<svg class="a" style="left:4px;top:356px" width="13" height="13"><path d="M7 1.5A4.8 4.8 0 1 1 1.5 5" fill="none" stroke="#888" stroke-width="2.6" opacity="0.5" transform="translate(1.2,1.2)"/><path d="M7 1.5A4.8 4.8 0 1 1 1.5 5" fill="none" stroke="#1ef01e" stroke-width="2.8"/><circle cx="6" cy="6.3" r="1.4" fill="#11a011"/></svg>
<div class="r" style="right:369px;top:374px;color:#000">269</div>
<div class="r" style="right:243px;top:374px;color:#000">1.3119</div>
<div class="r" style="right:172px;top:374px;color:#000">0.2549</div>
<div class="r" style="right:102px;top:374px;color:#000">0.5569</div>
<div class="r" style="right:32px;top:374px;color:#000">1.1602</div>
<svg class="a" style="left:4px;top:374px" width="13" height="13"><path d="M7 1.5A4.8 4.8 0 1 1 1.5 5" fill="none" stroke="#888" stroke-width="2.6" opacity="0.5" transform="translate(1.2,1.2)"/><path d="M7 1.5A4.8 4.8 0 1 1 1.5 5" fill="none" stroke="#1ef01e" stroke-width="2.8"/><circle cx="6" cy="6.3" r="1.4" fill="#11a011"/></svg>
<div class="r" style="right:369px;top:392px;color:#000">270</div>
<div class="r" style="right:243px;top:392px;color:#000">0.3790</div>
<div class="r" style="right:172px;top:392px;color:#000">0.0671</div>
<div class="r" style="right:102px;top:392px;color:#000">-0.2129</div>
<div class="r" style="right:32px;top:392px;color:#000">0.3063</div>
<svg class="a" style="left:4px;top:392px" width="13" height="13"><path d="M7 1.5A4.8 4.8 0 1 1 1.5 5" fill="none" stroke="#888" stroke-width="2.6" opacity="0.5" transform="translate(1.2,1.2)"/><path d="M7 1.5A4.8 4.8 0 1 1 1.5 5" fill="none" stroke="#1ef01e" stroke-width="2.8"/><circle cx="6" cy="6.3" r="1.4" fill="#11a011"/></svg>
</div>
<div class="a" style="left:799px;top:530px;width:55px;height:19px;background:#d4d0c8;border-top:1px solid #fff;border-left:1px solid #fff;border-right:1px solid #000;border-bottom:1px solid #000"></div>
<div class="t" style="left:805px;top:534px">OP</div>
<div class="a" style="left:854px;top:530px;width:51px;height:19px;background:#d4d0c8;border-top:1px solid #fff;border-left:1px solid #fff;border-right:1px solid #000;border-bottom:1px solid #000"></div>
<div class="t" style="left:859px;top:534px">ID</div>
<div class="a" style="left:905px;top:530px;width:126px;height:19px;background:#d4d0c8;border-top:1px solid #fff;border-left:1px solid #fff;border-right:1px solid #000;border-bottom:1px solid #000"></div>
<div class="t" style="left:911px;top:534px">Displacement [mm]</div>
<div class="a" style="left:1031px;top:530px;width:70px;height:19px;background:#d4d0c8;border-top:1px solid #fff;border-left:1px solid #fff;border-right:1px solid #000;border-bottom:1px solid #000"></div>
<div class="t" style="left:1035px;top:534px">x [mm]</div>
<div class="a" style="left:1101px;top:530px;width:70px;height:19px;background:#d4d0c8;border-top:1px solid #fff;border-left:1px solid #fff;border-right:1px solid #000;border-bottom:1px solid #000"></div>
<div class="t" style="left:1106px;top:534px">y [mm]</div>
<div class="a" style="left:1171px;top:530px;width:71px;height:19px;background:#d4d0c8;border-top:1px solid #fff;border-left:1px solid #fff;border-right:1px solid #000;border-bottom:1px solid #000"></div>
<div class="t" style="left:1177px;top:534px">z [mm]</div>
<div class="a" style="left:1242px;top:530px;width:13px;height:19px;background:#d4d0c8;border-top:1px solid #fff;border-left:1px solid #fff;border-right:1px solid #000;border-bottom:1px solid #000"></div>
<svg class="a" style="left:831px;top:533px" width="14" height="13"><path d="M1.5 1.5H12L6.7 11.5Z" fill="none" stroke="#555" stroke-width="1"/><path d="M1.5 1.5H12" stroke="#333"/></svg>
<div class="a" style="left:1256px;top:530px;width:16px;height:402px;background:repeating-conic-gradient(#d4d0c8 0 25%,#fff 0 50%) 0 0/2px 2px"></div>
<div class="a" style="left:1256px;top:531px;width:16px;height:16px;background:#d4d0c8;border-top:1px solid #fff;border-left:1px solid #fff;border-right:1px solid #000;border-bottom:1px solid #000"></div>
<svg class="a" style="left:1256px;top:531px" width="16" height="16"><path d="M4 10h7l-3.5-4z" fill="#000"/></svg>
<div class="a" style="left:1256px;top:756px;width:16px;height:27px;background:#d4d0c8;border-top:1px solid #fff;border-left:1px solid #fff;border-right:1px solid #000;border-bottom:1px solid #000"></div>
<div class="a" style="left:1256px;top:916px;width:16px;height:16px;background:#d4d0c8;border-top:1px solid #fff;border-left:1px solid #fff;border-right:1px solid #000;border-bottom:1px solid #000"></div>
<svg class="a" style="left:1256px;top:916px" width="16" height="16"><path d="M4 6h7l-3.5 4z" fill="#000"/></svg>

<!-- info panel -->
<div class="t" style="left:37px;top:525px">Info</div>
<div class="a" style="left:7px;top:541px;width:24px;height:23px;border-top:1px solid #000;border-left:1px solid #000;border-bottom:1px solid #fff;border-right:1px solid #fff;background:repeating-conic-gradient(#d4d0c8 0 25%,#fff 0 50%) 0 0/2px 2px"></div>
<svg class="a" style="left:7px;top:541px" width="24" height="23"><circle cx="13.5" cy="5.5" r="2" fill="#000"/><path d="M9 10.5L14 9.5L12 17.5L15 16.5M10.5 18.5L15 17" stroke="#000" stroke-width="2.6" fill="none" stroke-linejoin="round"/></svg>
<div class="a" style="left:7px;top:569px;width:24px;height:24px;border-top:1px solid #fff;border-left:1px solid #fff;border-bottom:2px solid #000;border-right:2px solid #000;background:#d4d0c8"></div>
<svg class="a" style="left:7px;top:569px" width="24" height="24"><circle cx="8.5" cy="9" r="2.8" fill="#1a1a8a"/><circle cx="8" cy="8.4" r="1" fill="#8a8aff"/><text x="12" y="19" font-size="10.5" font-family="Liberation Sans" fill="#000">G</text></svg>
<div class="a" style="left:7px;top:597px;width:24px;height:24px;border-top:1px solid #fff;border-left:1px solid #fff;border-bottom:2px solid #000;border-right:2px solid #000;background:#d4d0c8"></div>
<svg class="a" style="left:7px;top:597px" width="24" height="24"><path d="M9 7h9M6 11h9M9 16h9M15 5l3 2-3 2M12 9l3 2-3 2M15 14l3 2-3 2" stroke="#1010e0" stroke-width="1.3" fill="none"/><circle cx="9" cy="7" r="1.5" fill="#1b1"/><circle cx="6" cy="11" r="1.5" fill="#1b1"/><circle cx="9" cy="16" r="1.5" fill="#1b1"/></svg>
<div class="a" style="left:7px;top:625px;width:24px;height:24px;border-top:1px solid #fff;border-left:1px solid #fff;border-bottom:2px solid #000;border-right:2px solid #000;background:#d4d0c8"></div>
<svg class="a" style="left:7px;top:625px" width="24" height="24"><path d="M5 13L14 5" stroke="#1b1" stroke-width="1.6"/><path d="M13 11l3.5-2.5 3 3-3 3z" fill="none" stroke="#1b1" stroke-width="1.5"/></svg>
<div class="a" style="left:7px;top:653px;width:24px;height:24px;border-top:1px solid #fff;border-left:1px solid #fff;border-bottom:2px solid #000;border-right:2px solid #000;background:#d4d0c8"></div>
<svg class="a" style="left:7px;top:653px" width="24" height="24"><rect x="6" y="5" width="11" height="13" fill="#fff" stroke="#1010a0" stroke-width="1.4"/><path d="M8 8h2M11 8h4M8 11h2M11 11h4M8 14h2M11 14h4" stroke="#1010a0" stroke-width="1"/></svg>
<div class="a" style="left:35px;top:541px;width:266px;height:393px;border-top:2px solid #000;border-left:2px solid #000;border-right:1px solid #fff;border-bottom:1px solid #fff;background:#fff;overflow:hidden">
<div class="t" style="left:4px;top:4px;font-weight:bold">Stage Stage #1</div>
<div class="t" style="left:11px;top:38px">ID</div><div class="t" style="left:156px;top:38px">:</div><div class="t" style="left:182px;top:38px">1</div>
<div class="t" style="left:11px;top:57px">Bundle adjustment</div><div class="t" style="left:156px;top:57px">:</div><div class="t" style="left:182px;top:57px">0.099</div>
<div class="t" style="left:11px;top:76px">Deviation</div><div class="t" style="left:156px;top:76px">:</div><div class="t" style="left:182px;top:76px">0.055 mm</div>
<div class="t" style="left:11px;top:95px">Transformed</div><div class="t" style="left:156px;top:95px">:</div><div class="t" style="left:182px;top:95px">Yes</div>
<div class="t" style="left:11px;top:114px">Reference stage</div><div class="t" style="left:156px;top:114px">:</div><div class="t" style="left:182px;top:114px">Stage #0</div>
<div class="t" style="left:11px;top:133px">Points identified</div><div class="t" style="left:156px;top:133px">:</div><div class="t" style="left:182px;top:133px">Yes</div>
<div class="t" style="left:11px;top:152px">Object points total</div><div class="t" style="left:156px;top:152px">:</div><div class="t" style="left:182px;top:152px">278</div>
<div class="t" style="left:11px;top:171px">Transformation points total</div><div class="t" style="left:156px;top:171px">:</div><div class="t" style="left:182px;top:171px">4</div>
<div class="t" style="left:4px;top:216px;font-weight:bold">Object point #254</div>
<div class="t" style="left:11px;top:250px">Stage</div><div class="t" style="left:62px;top:250px">:</div><div class="t" style="left:90px;top:250px">Stage #1</div>
<div class="t" style="left:4px;top:295px;font-weight:bold">Point info</div>
<div class="t" style="left:11px;top:328px">X</div><div class="t" style="left:79px;top:328px">:</div><div class="t" style="left:106px;top:328px">-1369.351 mm</div>
<div class="t" style="left:11px;top:347px">Y</div><div class="t" style="left:79px;top:347px">:</div><div class="t" style="left:106px;top:347px">-1335.919 mm</div>
<div class="t" style="left:11px;top:366px">Z</div><div class="t" style="left:79px;top:366px">:</div><div class="t" style="left:106px;top:366px">266.5392 mm</div>
<div class="t" style="left:11px;top:385px">Deviation</div>
</div>
<div class="a" style="left:283px;top:543px;width:16px;height:389px;background:repeating-conic-gradient(#d4d0c8 0 25%,#fff 0 50%) 0 0/2px 2px"></div>
<div class="a" style="left:283px;top:544px;width:16px;height:16px;background:#d4d0c8;border-top:1px solid #fff;border-left:1px solid #fff;border-right:1px solid #000;border-bottom:1px solid #000"></div>
<svg class="a" style="left:283px;top:544px" width="16" height="16"><path d="M4 10h7l-3.5-4z" fill="#000"/></svg>
<div class="a" style="left:283px;top:560px;width:16px;height:226px;background:#d4d0c8;border-top:1px solid #fff;border-left:1px solid #fff;border-right:1px solid #000;border-bottom:1px solid #000"></div>
<div class="a" style="left:283px;top:916px;width:16px;height:16px;background:#d4d0c8;border-top:1px solid #fff;border-left:1px solid #fff;border-right:1px solid #000;border-bottom:1px solid #000"></div>
<svg class="a" style="left:283px;top:916px" width="16" height="16"><path d="M4 6h7l-3.5 4z" fill="#000"/></svg>

<!-- status bar -->
<div class="a" style="left:4px;top:937px;width:1272px;height:1px;background:#000"></div>
<div class="a" style="left:4px;top:938px;width:1272px;height:1px;background:#fff"></div>
<div class="a" style="left:4px;top:970px;width:1273px;height:1px;background:#404040"></div>
<div class="a" style="left:1px;top:971px;width:1278px;height:6px;background:#e0e0e0;border-top:1px solid #fff"></div>
<div class="a" style="left:2px;top:971px;width:18px;height:6px;background:#b0b0b0;border-right:1px solid #fff"></div>
<div class="a" style="left:1259px;top:971px;width:18px;height:6px;background:#b0b0b0;border-left:1px solid #fff"></div>
<div class="a" style="left:1279px;top:0px;width:1px;height:977px;background:#000"></div>
<div class="a" style="left:941px;top:943px;width:18px;height:25px;border-top:1px solid #808080;border-left:1px solid #808080;border-bottom:1px solid #fff;border-right:1px solid #fff"></div>
<svg class="a" style="left:942px;top:948px" width="16" height="16"><rect x="1" y="1" width="14" height="14" fill="#777"/><rect x="0" y="0" width="14" height="14" fill="#000"/><path d="M2 3.5h8M2 7h9M3 10.5h7" stroke-width="1.3" fill="none" stroke="#f0c020"/><path d="M3 7h8" stroke="#f02020" stroke-width="1.3"/><path d="M9 1.5l2 2-2 2M10 5l2 2-2 2M9 8.5l2 2-2 2" stroke="#f0c020" stroke-width="1" fill="none"/><path d="M10 5l2 2-2 2" stroke="#f02020" stroke-width="1" fill="none"/><circle cx="2.5" cy="3.5" r="1.2" fill="#2e2"/><circle cx="2.5" cy="7" r="1.2" fill="#2e2"/><circle cx="3" cy="10.5" r="1.2" fill="#2e2"/></svg>
<div class="a" style="left:961px;top:943px;width:131px;height:25px;border-top:1px solid #808080;border-left:1px solid #808080;border-bottom:1px solid #fff;border-right:1px solid #fff"></div>
<div class="t" style="left:964px;top:950px">Memory: 666/368/1018 MB</div>
<div class="a" style="left:1094px;top:945px;width:102px;height:22px;border-top:2px solid #404040;border-left:2px solid #404040;border-bottom:2px solid #fff;border-right:2px solid #fff"></div>
<div class="a" style="left:1198px;top:943px;width:25px;height:25px;border-top:1px solid #fff;border-left:1px solid #fff;border-bottom:2px solid #000;border-right:2px solid #000"></div>
<div class="a" style="left:1204px;top:948px;width:13px;height:14px;background:#b8b4ac;border-radius:2px;border-bottom:1px solid #fff;border-right:1px solid #fff"></div>
<div class="a" style="left:1226px;top:943px;width:23px;height:25px;border-top:1px solid #fff;border-left:1px solid #fff;border-bottom:2px solid #000;border-right:2px solid #000"></div>
<svg class="a" style="left:1228px;top:945px" width="20" height="20"><path d="M2 11h16v5H2z" fill="#fff" stroke="#888"/><circle cx="10" cy="8" r="5.5" fill="#2a4ad0"/><circle cx="10" cy="8" r="2" fill="#fff"/><path d="M6 6a5 5 0 0 1 4-3" stroke="#aac" stroke-width="1" fill="none"/></svg>
<div class="a" style="left:1250px;top:943px;width:22px;height:25px;border-top:2px solid #000;border-left:2px solid #000;border-bottom:1px solid #fff;border-right:1px solid #fff;background:repeating-conic-gradient(#d4d0c8 0 25%,#fff 0 50%) 0 0/2px 2px"></div>
<svg class="a" style="left:1251px;top:945px" width="20" height="20"><path d="M2 12h16v5H2z" fill="#fff" stroke="#888"/><path d="M10 2l7 7-7 7-7-7z" fill="#2a4ad0"/><text x="5.5" y="12" font-size="7" font-weight="bold" fill="#fff" font-family="Liberation Sans">CF</text></svg>

<!-- taskbar -->
<div class="a" style="left:0;top:977px;width:1280px;height:1px;background:#000"></div>
<div class="a" style="left:0;top:978px;width:1280px;height:46px;background:#e4e4e4;border-top:1px solid #fff"></div>
<div class="a" style="left:0;top:1022px;width:1280px;height:2px;background:#000"></div>
<div class="a" style="left:0;top:979px;width:380px;height:43px;background:linear-gradient(#d8d6e8,#bcb8d0)"></div>
<div class="a" style="left:2px;top:980px;width:42px;height:42px;border-top:1px solid #eeeef8;border-left:1px solid #eeeef8;border-right:2px solid #505060;border-bottom:1px solid #808090"></div>
<div class="a" style="left:44px;top:980px;width:42px;height:42px;border-top:1px solid #eeeef8;border-left:1px solid #eeeef8;border-right:2px solid #505060;border-bottom:1px solid #808090"></div>
<div class="a" style="left:86px;top:980px;width:42px;height:42px;border-top:1px solid #eeeef8;border-left:1px solid #eeeef8;border-right:2px solid #505060;border-bottom:1px solid #808090"></div>
<div class="a" style="left:128px;top:980px;width:42px;height:42px;border-top:1px solid #eeeef8;border-left:1px solid #eeeef8;border-right:2px solid #505060;border-bottom:1px solid #808090"></div>
<div class="a" style="left:170px;top:980px;width:42px;height:42px;border-top:1px solid #eeeef8;border-left:1px solid #eeeef8;border-right:2px solid #505060;border-bottom:1px solid #808090"></div>
<div class="a" style="left:212px;top:980px;width:42px;height:42px;border-top:1px solid #eeeef8;border-left:1px solid #eeeef8;border-right:2px solid #505060;border-bottom:1px solid #808090"></div>
<div class="a" style="left:254px;top:980px;width:42px;height:42px;border-top:1px solid #eeeef8;border-left:1px solid #eeeef8;border-right:2px solid #505060;border-bottom:1px solid #808090"></div>
<div class="a" style="left:296px;top:980px;width:42px;height:42px;border-top:1px solid #eeeef8;border-left:1px solid #eeeef8;border-right:2px solid #505060;border-bottom:1px solid #808090"></div>
<div class="a" style="left:338px;top:980px;width:42px;height:42px;border-top:1px solid #eeeef8;border-left:1px solid #eeeef8;border-right:2px solid #505060;border-bottom:1px solid #808090"></div><svg class="a" style="left:2px;top:980px" width="8" height="6"><path d="M0.5 5.5h7L4 1z" fill="#000"/></svg>
<svg class="a" style="left:5px;top:983px" width="36" height="36"><g fill="#f0f0f0" stroke="#555" stroke-width="0.8"><circle cx="16" cy="19" r="10"/><rect x="13" y="5" width="6" height="5"/><rect x="13" y="28" width="6" height="5"/><rect x="3" y="16" width="5" height="6"/><rect x="24" y="16" width="5" height="6"/><rect x="5" y="7" width="5" height="5" transform="rotate(45 7.5 9.5)"/><rect x="5" y="26" width="5" height="5" transform="rotate(45 7.5 28.5)"/><rect x="22" y="26" width="5" height="5" transform="rotate(45 24.5 28.5)"/></g><circle cx="16" cy="19" r="6" fill="#c88830"/><path d="M13 4h5v12l8-12h6l-9 13 9 15h-6l-8-13v13h-5z" fill="#fff" stroke="#333" stroke-width="0.8"/></svg>
<svg class="a" style="left:48px;top:985px" width="36" height="32"><path d="M4 2l28 8v20L4 22z" fill="#3a90d8" stroke="#224" stroke-width="0.8"/><path d="M8 8l10 4-3 6 8-3-2 8" stroke="#fff" stroke-width="2" fill="none"/><path d="M20 22l10 4v4l-10-4z" fill="#ccc"/><path d="M1 20l10-8 10 8v11H1z" fill="#fff" stroke="#333" stroke-width="0.9"/><path d="M0 21l11-9 11 9" fill="none" stroke="#555" stroke-width="1.5"/><rect x="8" y="22" width="5" height="9" fill="#b05010"/></svg>
<svg class="a" style="left:92px;top:985px;overflow:hidden" width="32" height="32"><defs><linearGradient id="shp" x1="0" y1="0" x2="0" y2="1"><stop offset="0" stop-color="#2a8088"/><stop offset="1" stop-color="#0a4a50"/></linearGradient></defs><rect width="32" height="32" fill="url(#shp)"/><rect x="0.5" y="0.5" width="31" height="31" fill="none" stroke="#7ab8c0"/><circle cx="16" cy="31" r="13" fill="none" stroke="#5ab0b8" stroke-width="3"/><path d="M16 8v24M2 27L30 20M2 20l28 7" stroke="#5ab0b8" stroke-width="2"/><path d="M14 6h4v10h-4z" fill="#5ab0b8"/><circle cx="16" cy="6" r="2.5" fill="#5ab0b8"/></svg>
<svg class="a" style="left:132px;top:984px" width="34" height="34"><path d="M10 1h18l3 3v27H10z" fill="#fff" stroke="#000" stroke-width="1"/><path d="M12 5h18M12 9h18M12 13h18M12 17h18M12 21h18M12 25h18M12 29h18M14 2v28M18 2v28M22 2v28M26 2v28" stroke="#a8a8f0" stroke-width="0.7"/><path d="M20 6l8 17" stroke="#000" stroke-width="4"/><path d="M20 6l8 17" stroke="#e88020" stroke-width="2.6"/><rect x="2" y="8" width="16" height="21" fill="#10a8a8" stroke="#000" stroke-width="1.2"/><rect x="4" y="10" width="12" height="4" fill="#000"/><path d="M10 11h4" stroke="#2f2" stroke-width="1.5"/><path d="M4 16h3v2H4zM8 16h3v2H8zM12 16h3v2h-3zM4 20h3v2H4zM8 20h3v2H8zM12 20h3v2h-3zM4 24h3v2H4zM8 24h3v2H8z" fill="#999"/><rect x="12" y="24" width="3" height="2" fill="#e22"/></svg>
<svg class="a" style="left:174px;top:984px" width="34" height="34"><path d="M5 28L27 6" stroke="#c07020" stroke-width="3.5"/><path d="M6 4l22 24" stroke="#777" stroke-width="3.5"/><circle cx="6" cy="5" r="4" fill="none" stroke="#777" stroke-width="2.5"/><circle cx="28" cy="28" r="4" fill="none" stroke="#777" stroke-width="2.5"/><circle cx="17" cy="17" r="8" fill="#38a838" stroke="#236a23" stroke-width="1"/><path d="M24 3l6 4-3 3-5-4z" fill="#666"/><circle cx="17" cy="17" r="3" fill="none" stroke="#9d9" stroke-width="1"/></svg>
<svg class="a" style="left:216px;top:984px" width="34" height="34"><rect x="2" y="3" width="21" height="15" fill="#eee" stroke="#000" stroke-width="1.2"/><rect x="4" y="5" width="17" height="11" fill="#000"/><path d="M6 8l2 1.5-2 1.5M9 11h3" stroke="#fff" stroke-width="0.8" fill="none"/><rect x="14" y="14" width="17" height="14" fill="#ddd" stroke="#000" stroke-width="1.2"/><rect x="16" y="16" width="12" height="8" fill="#10a0a8"/><rect x="15" y="28" width="16" height="4" fill="#ccc" stroke="#000"/><path d="M3 20c0 5 4 3 5 7s5 2 7 1" stroke="#000" stroke-width="1" fill="none"/><rect x="18" y="29.5" width="3" height="1" fill="#2c2"/></svg>
<svg class="a" style="left:259px;top:985px" width="32" height="32"><rect width="32" height="32" fill="#000"/><path d="M8 16l9-3 8 3v8l-9 4-8-3z" fill="#ddd"/><path d="M16 19l9-3v8l-9 4z" fill="#999"/><path d="M8 16l8 3v9l-8-3z" fill="#bbb"/><path d="M17 13l2-8" stroke="#999" stroke-width="1.2"/><path d="M18 5l4 2" stroke="#999"/></svg>
<svg class="a" style="left:301px;top:985px" width="32" height="32"><rect width="32" height="32" fill="#d00"/><rect x="0.5" y="0.5" width="31" height="31" fill="none" stroke="#a00"/><circle cx="7" cy="7" r="3" fill="#fff"/><path d="M7 1v12M1 7h12M3 3l8 8M11 3l-8 8" stroke="#fff" stroke-width="0.8"/><path d="M10 7h20" stroke="#fff" stroke-width="1.2"/><path d="M18 13a9 9 0 0 1 6 12" stroke="#fff" stroke-width="4" fill="none"/><path d="M7 20a9 9 0 0 0 10 7" stroke="#fff" stroke-width="4" fill="none"/><circle cx="16" cy="19" r="2" fill="#fff"/></svg>
<svg class="a" style="left:343px;top:985px" width="32" height="32"><rect width="32" height="32" fill="#d00"/><circle cx="7" cy="7" r="3" fill="#fff"/><path d="M7 1v12M1 7h12M3 3l8 8M11 3l-8 8" stroke="#fff" stroke-width="0.8"/><path d="M10 7h20" stroke="#fff" stroke-width="1.2"/><path d="M5 28C6 18 14 13 30 11V24L22 28Z" fill="#e8e8e8"/><path d="M10 27c2-6 8-10 18-12" stroke="#aaa" stroke-width="1" fill="none"/></svg>
<!-- pager -->
<div class="a" style="left:463px;top:980px;width:5px;height:42px;border-left:1px solid #808080;border-right:1px solid #808080;background:linear-gradient(90deg,#fff 0 1px,transparent 1px 2px,#808080 2px 3px,#fff 3px)"></div>
<div class="a" style="left:468px;top:980px;width:53px;height:42px;background:#fff"></div>
<div class="a" style="left:469px;top:981px;width:25px;height:20px;background:#0a5a94;border:1px solid #fff;outline:1px solid #000"></div>
<div class="a" style="left:496px;top:981px;width:25px;height:20px;background:#4a4a4a;color:#fff;font-weight:bold;font-size:11px;text-align:center;line-height:20px">3</div>
<div class="a" style="left:469px;top:1002px;width:25px;height:20px;background:#4a4a4a;color:#fff;font-weight:bold;font-size:11px;text-align:center;line-height:20px">2</div>
<div class="a" style="left:496px;top:1002px;width:25px;height:20px;background:#4a4a4a;color:#fff;font-weight:bold;font-size:11px;text-align:center;line-height:20px">4</div>
<div class="a" style="left:522px;top:980px;width:5px;height:42px;border-left:1px solid #808080;border-right:1px solid #808080;background:linear-gradient(90deg,#fff 0 1px,transparent 1px 2px,#808080 2px 3px,#fff 3px)"></div>
<svg class="a" style="left:529px;top:982px" width="9" height="6"><path d="M0.5 5.5h8L4.5 1z" fill="#000"/></svg>
<!-- task buttons -->
<div class="a" style="left:540px;top:981px;width:201px;height:40px;border:1px solid #000;background:linear-gradient(#f4f4f4,#d8d8d8)"></div>
<div class="a" style="left:541px;top:982px;width:199px;height:19px;background:#c8c8c8"></div>
<div class="a" style="left:546px;top:984px;width:16px;height:16px;background:#000"></div>
<svg class="a" style="left:546px;top:984px" width="16" height="16"><path d="M3 8 L8 6 L13 8 L13 13 L8 15 L3 13Z" fill="#ddd"/><path d="M8 10 L13 8 L13 13 L8 15Z" fill="#999"/><path d="M3 8 L8 10 L8 15 L3 13Z" fill="#bbb"/><path d="M8 6 L9 2" stroke="#888"/></svg>
<div class="t" style="left:563px;top:985px">ambridef1.dyn - TRITOP - v5.3.0-8</div>
<svg class="a" style="left:546px;top:1003px" width="16" height="16"><path d="M1 3l13 2v10L1 13z" fill="#3a80d0" stroke="#224" stroke-width="0.8"/><path d="M2 6l11 2M2 9l11 2" stroke="#cde" stroke-width="1"/></svg>
<div class="t" style="left:563px;top:1003px">(Konqueror)</div>
<svg class="a" style="left:728px;top:1004px" width="10" height="7"><path d="M0.5 6.5h9L5 1z" fill="#000"/></svg>
<!-- right tray -->
<div class="a" style="left:1172px;top:980px;width:5px;height:42px;border-left:1px solid #808080;border-right:1px solid #808080;background:linear-gradient(90deg,#fff 0 1px,transparent 1px 2px,#808080 2px 3px,#fff 3px)"></div>
<div class="a" style="left:1178px;top:980px;width:23px;height:20px;border-top:1px solid #fff;border-left:1px solid #fff;border-right:1px solid #808080;border-bottom:1px solid #808080"></div>
<svg class="a" style="left:1181px;top:981px" width="18" height="19"><path d="M5 9V6a4 4 0 0 1 8 0v3" stroke="#555" stroke-width="2" fill="none"/><rect x="3" y="9" width="12" height="9" rx="1" fill="#e8e0b0" stroke="#776" stroke-width="1"/></svg>
<div class="a" style="left:1178px;top:1001px;width:23px;height:21px;border-top:1px solid #fff;border-left:1px solid #fff;border-right:1px solid #808080;border-bottom:1px solid #808080"></div>
<svg class="a" style="left:1181px;top:1003px" width="18" height="18"><path d="M5.5 6a5.5 5.5 0 1 0 7 0" stroke="#000" stroke-width="2" fill="none"/><path d="M9 3v7" stroke="#000" stroke-width="2"/></svg>
<div class="a" style="left:1202px;top:980px;width:5px;height:42px;border-left:1px solid #808080;border-right:1px solid #808080;background:linear-gradient(90deg,#fff 0 1px,transparent 1px 2px,#808080 2px 3px,#fff 3px)"></div>
<div class="a" style="left:1208px;top:980px;width:67px;height:28px;background:repeating-linear-gradient(#d4d0c0 0 1px,#a8a498 1px 2px)"></div>
<svg class="a" style="left:1208px;top:980px" width="67" height="28"><path transform="translate(5,5)" d="M0 0h11v13H4v4h7v4H0V9h7V4H0z" fill="#8a8890"/><path transform="translate(17,5)" d="M0 0h11v21H0v-4h7v-4H2V9h5V4H0z" fill="#8a8890"/><path transform="translate(41,5)" d="M0 0h4v9h3V0h4v21H7v-8H0z" fill="#8a8890"/><path transform="translate(53,5)" d="M0 0h11v21H7V4H0z" fill="#8a8890"/><path transform="translate(3,3)" d="M0 0h11v13H4v4h7v4H0V9h7V4H0z" fill="#000"/><path transform="translate(15,3)" d="M0 0h11v21H0v-4h7v-4H2V9h5V4H0z" fill="#000"/><path transform="translate(39,3)" d="M0 0h4v9h3V0h4v21H7v-8H0z" fill="#000"/><path transform="translate(51,3)" d="M0 0h11v21H7V4H0z" fill="#000"/></svg>
<div class="a" style="left:1208px;top:1008px;width:67px;height:14px;background:#e0e0e0"></div>
<div class="t" style="left:1213px;top:1010px;font-size:11px;letter-spacing:0px">2005-03-22</div>

</body></html>
